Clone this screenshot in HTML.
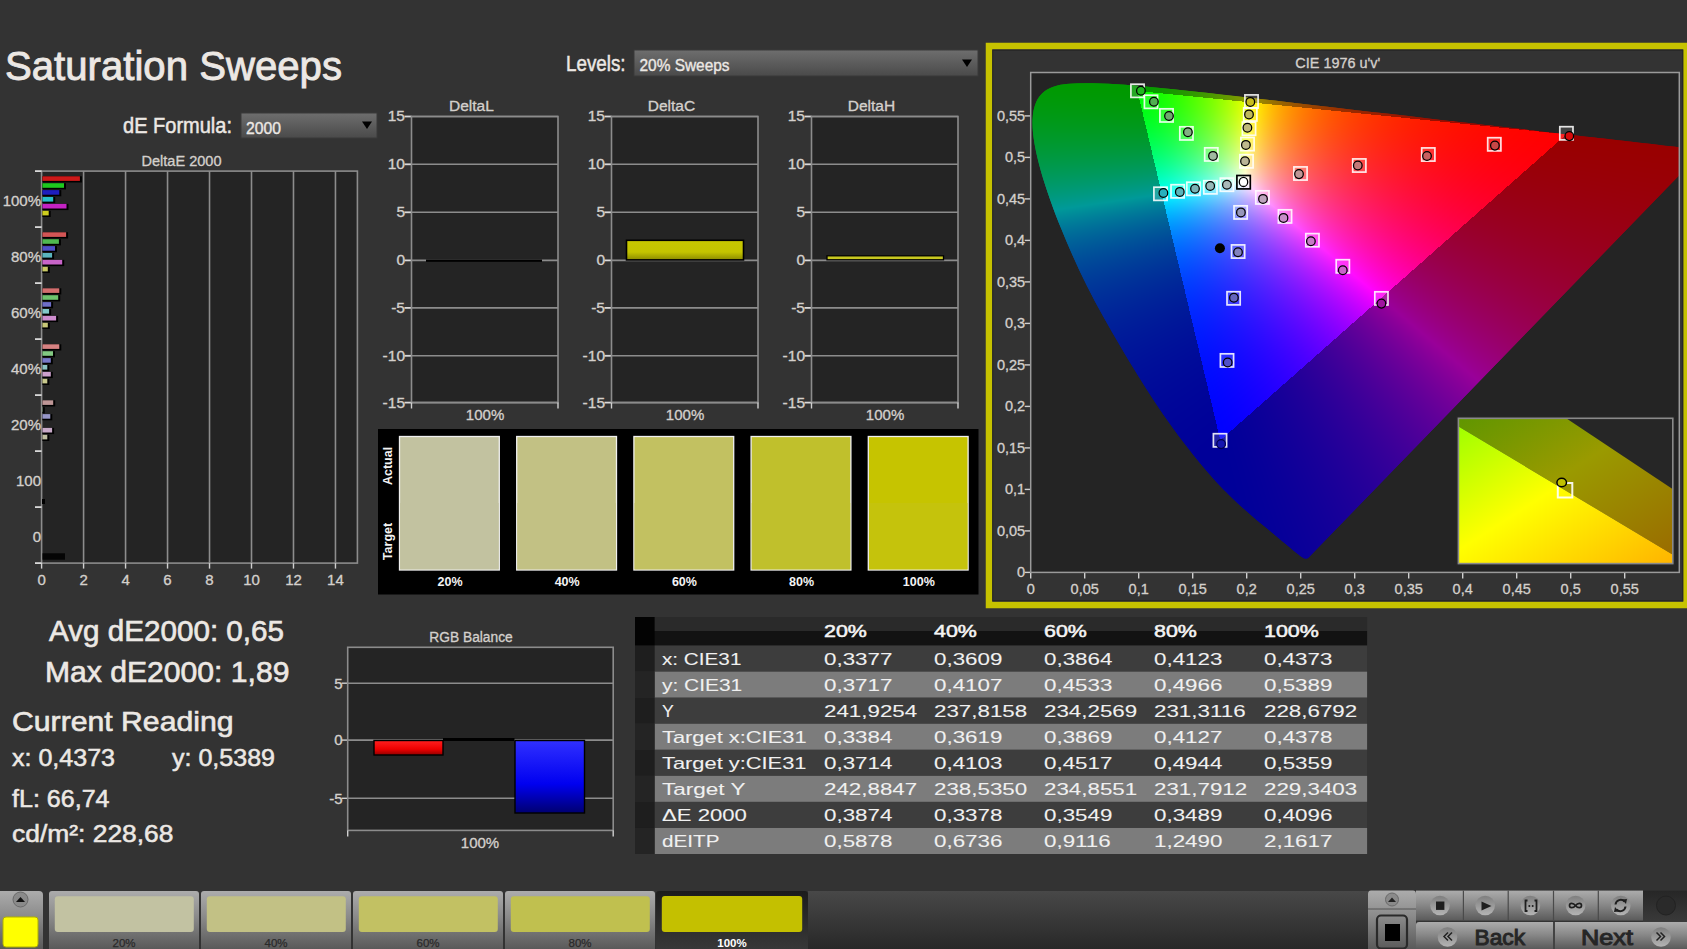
<!DOCTYPE html>
<html><head><meta charset="utf-8"><style>
html,body{margin:0;padding:0;background:#333333;width:1687px;height:949px;overflow:hidden}
svg{position:absolute;left:0;top:0}
text{font-family:"Liberation Sans", sans-serif}
#cv{position:absolute;left:0;top:0}
</style></head><body>
<svg width="1687" height="949" viewBox="0 0 1687 949">
<text x="5" y="79.5" font-size="41" fill="#ece8e4" stroke="#ece8e4" stroke-width="0.90" textLength="337" lengthAdjust="spacingAndGlyphs">Saturation Sweeps</text><text x="123" y="133" font-size="21.5" fill="#ece8e4" stroke="#ece8e4" stroke-width="0.47" textLength="109" lengthAdjust="spacingAndGlyphs">dE Formula:</text><text x="566" y="71" font-size="21.5" fill="#ece8e4" stroke="#ece8e4" stroke-width="0.47" textLength="59.5" lengthAdjust="spacingAndGlyphs">Levels:</text><defs><linearGradient id="dd" x1="0" y1="0" x2="0" y2="1"><stop offset="0" stop-color="#6e6e6e"/><stop offset="1" stop-color="#4a4a4a"/></linearGradient><linearGradient id="btn" x1="0" y1="0" x2="0" y2="1"><stop offset="0" stop-color="#acacac"/><stop offset="0.45" stop-color="#8a8a8a"/><stop offset="1" stop-color="#5a5a5a"/></linearGradient><linearGradient id="btnsel" x1="0" y1="0" x2="0" y2="1"><stop offset="0" stop-color="#1c1c1c"/><stop offset="1" stop-color="#383838"/></linearGradient><linearGradient id="barY" x1="0" y1="0" x2="0" y2="1"><stop offset="0" stop-color="#c8c800"/><stop offset="0.6" stop-color="#c4c400"/><stop offset="1" stop-color="#8a8a00"/></linearGradient><linearGradient id="barR" x1="0" y1="0" x2="0" y2="1"><stop offset="0" stop-color="#ff2020"/><stop offset="0.6" stop-color="#ee0000"/><stop offset="1" stop-color="#900000"/></linearGradient><linearGradient id="barB" x1="0" y1="0" x2="0" y2="1"><stop offset="0" stop-color="#3030ff"/><stop offset="0.6" stop-color="#0000f0"/><stop offset="1" stop-color="#000070"/></linearGradient></defs><rect x="241" y="113" width="136" height="25" fill="url(#dd)" stroke="#3a3a3a" stroke-width="1"/><text x="246" y="133.5" font-size="17" fill="#ece8e4" stroke="#ece8e4" stroke-width="0.37" textLength="35" lengthAdjust="spacingAndGlyphs">2000</text><path d="M362 121.5 L372 121.5 L367 129 Z" fill="#000"/><rect x="634" y="50" width="344" height="26" fill="url(#dd)" stroke="#3a3a3a" stroke-width="1"/><text x="639.5" y="70.7" font-size="17" fill="#ece8e4" stroke="#ece8e4" stroke-width="0.37" textLength="90" lengthAdjust="spacingAndGlyphs">20% Sweeps</text><path d="M962 59.5 L972 59.5 L967 67 Z" fill="#000"/><text x="181.5" y="165.6" font-size="15.5" fill="#d4d0cc" stroke="#d4d0cc" stroke-width="0.34" text-anchor="middle" textLength="80" lengthAdjust="spacingAndGlyphs">DeltaE 2000</text><rect x="41.6" y="171.1" width="315.79999999999995" height="392.0" fill="#242424"/><line x1="83.58" y1="171.1" x2="83.58" y2="563.1" stroke="#8c8c8c" stroke-width="1.6"/><line x1="125.56" y1="171.1" x2="125.56" y2="563.1" stroke="#8c8c8c" stroke-width="1.6"/><line x1="167.54" y1="171.1" x2="167.54" y2="563.1" stroke="#8c8c8c" stroke-width="1.6"/><line x1="209.51999999999998" y1="171.1" x2="209.51999999999998" y2="563.1" stroke="#8c8c8c" stroke-width="1.6"/><line x1="251.49999999999997" y1="171.1" x2="251.49999999999997" y2="563.1" stroke="#8c8c8c" stroke-width="1.6"/><line x1="293.48" y1="171.1" x2="293.48" y2="563.1" stroke="#8c8c8c" stroke-width="1.6"/><line x1="335.46" y1="171.1" x2="335.46" y2="563.1" stroke="#8c8c8c" stroke-width="1.6"/><rect x="41.6" y="171.1" width="315.79999999999995" height="392.0" fill="none" stroke="#8c8c8c" stroke-width="1.6"/><line x1="41.6" y1="563.1" x2="41.6" y2="568.6" stroke="#d0d0d0" stroke-width="1.4"/><text x="41.6" y="584.8" font-size="15" fill="#d4d0cc" stroke="#d4d0cc" stroke-width="0.33" text-anchor="middle">0</text><line x1="83.58" y1="563.1" x2="83.58" y2="568.6" stroke="#d0d0d0" stroke-width="1.4"/><text x="83.58" y="584.8" font-size="15" fill="#d4d0cc" stroke="#d4d0cc" stroke-width="0.33" text-anchor="middle">2</text><line x1="125.56" y1="563.1" x2="125.56" y2="568.6" stroke="#d0d0d0" stroke-width="1.4"/><text x="125.56" y="584.8" font-size="15" fill="#d4d0cc" stroke="#d4d0cc" stroke-width="0.33" text-anchor="middle">4</text><line x1="167.54" y1="563.1" x2="167.54" y2="568.6" stroke="#d0d0d0" stroke-width="1.4"/><text x="167.54" y="584.8" font-size="15" fill="#d4d0cc" stroke="#d4d0cc" stroke-width="0.33" text-anchor="middle">6</text><line x1="209.51999999999998" y1="563.1" x2="209.51999999999998" y2="568.6" stroke="#d0d0d0" stroke-width="1.4"/><text x="209.51999999999998" y="584.8" font-size="15" fill="#d4d0cc" stroke="#d4d0cc" stroke-width="0.33" text-anchor="middle">8</text><line x1="251.49999999999997" y1="563.1" x2="251.49999999999997" y2="568.6" stroke="#d0d0d0" stroke-width="1.4"/><text x="251.49999999999997" y="584.8" font-size="15" fill="#d4d0cc" stroke="#d4d0cc" stroke-width="0.33" text-anchor="middle">10</text><line x1="293.48" y1="563.1" x2="293.48" y2="568.6" stroke="#d0d0d0" stroke-width="1.4"/><text x="293.48" y="584.8" font-size="15" fill="#d4d0cc" stroke="#d4d0cc" stroke-width="0.33" text-anchor="middle">12</text><line x1="335.46" y1="563.1" x2="335.46" y2="568.6" stroke="#d0d0d0" stroke-width="1.4"/><text x="335.46" y="584.8" font-size="15" fill="#d4d0cc" stroke="#d4d0cc" stroke-width="0.33" text-anchor="middle">14</text><line x1="35" y1="171.1" x2="41.6" y2="171.1" stroke="#d8d8d8" stroke-width="1.8"/><line x1="35" y1="227.1" x2="41.6" y2="227.1" stroke="#d8d8d8" stroke-width="1.8"/><line x1="35" y1="283.1" x2="41.6" y2="283.1" stroke="#d8d8d8" stroke-width="1.8"/><line x1="35" y1="339.1" x2="41.6" y2="339.1" stroke="#d8d8d8" stroke-width="1.8"/><line x1="35" y1="395.1" x2="41.6" y2="395.1" stroke="#d8d8d8" stroke-width="1.8"/><line x1="35" y1="451.1" x2="41.6" y2="451.1" stroke="#d8d8d8" stroke-width="1.8"/><line x1="35" y1="507.1" x2="41.6" y2="507.1" stroke="#d8d8d8" stroke-width="1.8"/><line x1="35" y1="563.1" x2="41.6" y2="563.1" stroke="#d8d8d8" stroke-width="1.8"/><text x="41" y="205.5" font-size="15" fill="#d4d0cc" stroke="#d4d0cc" stroke-width="0.33" text-anchor="end">100%</text><text x="41" y="261.5" font-size="15" fill="#d4d0cc" stroke="#d4d0cc" stroke-width="0.33" text-anchor="end">80%</text><text x="41" y="317.5" font-size="15" fill="#d4d0cc" stroke="#d4d0cc" stroke-width="0.33" text-anchor="end">60%</text><text x="41" y="373.5" font-size="15" fill="#d4d0cc" stroke="#d4d0cc" stroke-width="0.33" text-anchor="end">40%</text><text x="41" y="429.5" font-size="15" fill="#d4d0cc" stroke="#d4d0cc" stroke-width="0.33" text-anchor="end">20%</text><text x="41" y="485.5" font-size="15" fill="#d4d0cc" stroke="#d4d0cc" stroke-width="0.33" text-anchor="end">100</text><text x="41" y="541.5" font-size="15" fill="#d4d0cc" stroke="#d4d0cc" stroke-width="0.33" text-anchor="end">0</text><rect x="42.4" y="176.3" width="39.5" height="6.2" fill="#000"/><rect x="42.4" y="176.3" width="37.5" height="4.6" fill="rgb(205,25,25)"/><rect x="42.4" y="183.2" width="23.6" height="6.2" fill="#000"/><rect x="42.4" y="183.2" width="21.6" height="4.6" fill="rgb(30,200,30)"/><rect x="42.4" y="190.1" width="18.9" height="6.2" fill="#000"/><rect x="42.4" y="190.1" width="16.9" height="4.6" fill="rgb(30,30,190)"/><rect x="42.4" y="197.0" width="12.8" height="6.2" fill="#000"/><rect x="42.4" y="197.0" width="10.8" height="4.6" fill="rgb(40,190,200)"/><rect x="42.4" y="203.9" width="26.1" height="6.2" fill="#000"/><rect x="42.4" y="203.9" width="24.1" height="4.6" fill="rgb(195,35,195)"/><rect x="42.4" y="210.8" width="8.3" height="6.2" fill="#000"/><rect x="42.4" y="210.8" width="6.3" height="4.6" fill="rgb(205,205,30)"/><rect x="42.4" y="232.3" width="25.7" height="6.2" fill="#000"/><rect x="42.4" y="232.3" width="23.7" height="4.6" fill="rgb(210,85,85)"/><rect x="42.4" y="239.2" width="18.5" height="6.2" fill="#000"/><rect x="42.4" y="239.2" width="16.5" height="4.6" fill="rgb(80,185,80)"/><rect x="42.4" y="246.1" width="14.6" height="6.2" fill="#000"/><rect x="42.4" y="246.1" width="12.6" height="4.6" fill="rgb(80,80,200)"/><rect x="42.4" y="253.0" width="11.7" height="6.2" fill="#000"/><rect x="42.4" y="253.0" width="9.7" height="4.6" fill="rgb(90,180,190)"/><rect x="42.4" y="259.9" width="21.8" height="6.2" fill="#000"/><rect x="42.4" y="259.9" width="19.8" height="4.6" fill="rgb(200,100,200)"/><rect x="42.4" y="266.8" width="7.4" height="6.2" fill="#000"/><rect x="42.4" y="266.8" width="5.4" height="4.6" fill="rgb(200,200,100)"/><rect x="42.4" y="288.3" width="18.9" height="6.2" fill="#000"/><rect x="42.4" y="288.3" width="16.9" height="4.6" fill="rgb(210,110,110)"/><rect x="42.4" y="295.2" width="17.8" height="6.2" fill="#000"/><rect x="42.4" y="295.2" width="15.8" height="4.6" fill="rgb(110,195,110)"/><rect x="42.4" y="302.1" width="10.7" height="6.2" fill="#000"/><rect x="42.4" y="302.1" width="8.7" height="4.6" fill="rgb(110,110,200)"/><rect x="42.4" y="309.0" width="8.7" height="6.2" fill="#000"/><rect x="42.4" y="309.0" width="6.7" height="4.6" fill="rgb(130,200,200)"/><rect x="42.4" y="315.9" width="15.7" height="6.2" fill="#000"/><rect x="42.4" y="315.9" width="13.7" height="4.6" fill="rgb(205,140,205)"/><rect x="42.4" y="322.8" width="7.4" height="6.2" fill="#000"/><rect x="42.4" y="322.8" width="5.4" height="4.6" fill="rgb(200,200,120)"/><rect x="42.4" y="344.3" width="18.9" height="6.2" fill="#000"/><rect x="42.4" y="344.3" width="16.9" height="4.6" fill="rgb(215,130,130)"/><rect x="42.4" y="351.2" width="12.6" height="6.2" fill="#000"/><rect x="42.4" y="351.2" width="10.6" height="4.6" fill="rgb(130,200,130)"/><rect x="42.4" y="358.1" width="10.4" height="6.2" fill="#000"/><rect x="42.4" y="358.1" width="8.4" height="4.6" fill="rgb(120,120,200)"/><rect x="42.4" y="365.0" width="6.9" height="6.2" fill="#000"/><rect x="42.4" y="365.0" width="4.9" height="4.6" fill="rgb(140,195,195)"/><rect x="42.4" y="371.9" width="10.4" height="6.2" fill="#000"/><rect x="42.4" y="371.9" width="8.4" height="4.6" fill="rgb(205,160,205)"/><rect x="42.4" y="378.8" width="6.9" height="6.2" fill="#000"/><rect x="42.4" y="378.8" width="4.9" height="4.6" fill="rgb(200,200,140)"/><rect x="42.4" y="400.3" width="12.8" height="6.2" fill="#000"/><rect x="42.4" y="400.3" width="10.8" height="4.6" fill="rgb(190,150,150)"/><rect x="42.4" y="407.2" width="2.4" height="6.2" fill="#000"/><rect x="42.4" y="407.2" width="0.4" height="4.6" fill="rgb(150,190,150)"/><rect x="42.4" y="414.1" width="9.9" height="6.2" fill="#000"/><rect x="42.4" y="414.1" width="7.9" height="4.6" fill="rgb(150,150,200)"/><rect x="42.4" y="427.9" width="11.7" height="6.2" fill="#000"/><rect x="42.4" y="427.9" width="9.7" height="4.6" fill="rgb(200,170,200)"/><rect x="42.4" y="434.8" width="6.9" height="6.2" fill="#000"/><rect x="42.4" y="434.8" width="4.9" height="4.6" fill="rgb(190,190,160)"/><rect x="42" y="499" width="3" height="5" fill="#000"/><rect x="42.5" y="553.3" width="22.5" height="6.4" fill="#050505"/><text x="471.45" y="111" font-size="15.5" fill="#d4d0cc" stroke="#d4d0cc" stroke-width="0.34" text-anchor="middle">DeltaL</text><rect x="411.5" y="116.5" width="146.5" height="286.0" fill="#242424"/><line x1="411.5" y1="116.5" x2="558.0" y2="116.5" stroke="#8c8c8c" stroke-width="1.6"/><line x1="404.5" y1="116.5" x2="411.5" y2="116.5" stroke="#d8d8d8" stroke-width="1.8"/><text x="405.0" y="121.4" font-size="15.5" fill="#d4d0cc" stroke="#d4d0cc" stroke-width="0.34" text-anchor="end">15</text><line x1="411.5" y1="164.3" x2="558.0" y2="164.3" stroke="#8c8c8c" stroke-width="1.6"/><line x1="404.5" y1="164.3" x2="411.5" y2="164.3" stroke="#d8d8d8" stroke-width="1.8"/><text x="405.0" y="169.20000000000002" font-size="15.5" fill="#d4d0cc" stroke="#d4d0cc" stroke-width="0.34" text-anchor="end">10</text><line x1="411.5" y1="212.3" x2="558.0" y2="212.3" stroke="#8c8c8c" stroke-width="1.6"/><line x1="404.5" y1="212.3" x2="411.5" y2="212.3" stroke="#d8d8d8" stroke-width="1.8"/><text x="405.0" y="217.20000000000002" font-size="15.5" fill="#d4d0cc" stroke="#d4d0cc" stroke-width="0.34" text-anchor="end">5</text><line x1="411.5" y1="260.4" x2="558.0" y2="260.4" stroke="#8c8c8c" stroke-width="1.6"/><line x1="404.5" y1="260.4" x2="411.5" y2="260.4" stroke="#d8d8d8" stroke-width="1.8"/><text x="405.0" y="265.29999999999995" font-size="15.5" fill="#d4d0cc" stroke="#d4d0cc" stroke-width="0.34" text-anchor="end">0</text><line x1="411.5" y1="307.9" x2="558.0" y2="307.9" stroke="#8c8c8c" stroke-width="1.6"/><line x1="404.5" y1="307.9" x2="411.5" y2="307.9" stroke="#d8d8d8" stroke-width="1.8"/><text x="405.0" y="312.79999999999995" font-size="15.5" fill="#d4d0cc" stroke="#d4d0cc" stroke-width="0.34" text-anchor="end">-5</text><line x1="411.5" y1="355.8" x2="558.0" y2="355.8" stroke="#8c8c8c" stroke-width="1.6"/><line x1="404.5" y1="355.8" x2="411.5" y2="355.8" stroke="#d8d8d8" stroke-width="1.8"/><text x="405.0" y="360.7" font-size="15.5" fill="#d4d0cc" stroke="#d4d0cc" stroke-width="0.34" text-anchor="end">-10</text><line x1="411.5" y1="402.6" x2="558.0" y2="402.6" stroke="#8c8c8c" stroke-width="1.6"/><line x1="404.5" y1="402.6" x2="411.5" y2="402.6" stroke="#d8d8d8" stroke-width="1.8"/><text x="405.0" y="407.5" font-size="15.5" fill="#d4d0cc" stroke="#d4d0cc" stroke-width="0.34" text-anchor="end">-15</text><rect x="411.5" y="116.5" width="146.5" height="286.0" fill="none" stroke="#8c8c8c" stroke-width="1.6"/><line x1="411.5" y1="402.5" x2="411.5" y2="408.5" stroke="#d0d0d0" stroke-width="1.4"/><line x1="558.0" y1="402.5" x2="558.0" y2="408.5" stroke="#d0d0d0" stroke-width="1.4"/><text x="485.05" y="419.6" font-size="15" fill="#d4d0cc" stroke="#d4d0cc" stroke-width="0.33" text-anchor="middle">100%</text><text x="671.45" y="111" font-size="15.5" fill="#d4d0cc" stroke="#d4d0cc" stroke-width="0.34" text-anchor="middle">DeltaC</text><rect x="611.5" y="116.5" width="146.5" height="286.0" fill="#242424"/><line x1="611.5" y1="116.5" x2="758.0" y2="116.5" stroke="#8c8c8c" stroke-width="1.6"/><line x1="604.5" y1="116.5" x2="611.5" y2="116.5" stroke="#d8d8d8" stroke-width="1.8"/><text x="605.0" y="121.4" font-size="15.5" fill="#d4d0cc" stroke="#d4d0cc" stroke-width="0.34" text-anchor="end">15</text><line x1="611.5" y1="164.3" x2="758.0" y2="164.3" stroke="#8c8c8c" stroke-width="1.6"/><line x1="604.5" y1="164.3" x2="611.5" y2="164.3" stroke="#d8d8d8" stroke-width="1.8"/><text x="605.0" y="169.20000000000002" font-size="15.5" fill="#d4d0cc" stroke="#d4d0cc" stroke-width="0.34" text-anchor="end">10</text><line x1="611.5" y1="212.3" x2="758.0" y2="212.3" stroke="#8c8c8c" stroke-width="1.6"/><line x1="604.5" y1="212.3" x2="611.5" y2="212.3" stroke="#d8d8d8" stroke-width="1.8"/><text x="605.0" y="217.20000000000002" font-size="15.5" fill="#d4d0cc" stroke="#d4d0cc" stroke-width="0.34" text-anchor="end">5</text><line x1="611.5" y1="260.4" x2="758.0" y2="260.4" stroke="#8c8c8c" stroke-width="1.6"/><line x1="604.5" y1="260.4" x2="611.5" y2="260.4" stroke="#d8d8d8" stroke-width="1.8"/><text x="605.0" y="265.29999999999995" font-size="15.5" fill="#d4d0cc" stroke="#d4d0cc" stroke-width="0.34" text-anchor="end">0</text><line x1="611.5" y1="307.9" x2="758.0" y2="307.9" stroke="#8c8c8c" stroke-width="1.6"/><line x1="604.5" y1="307.9" x2="611.5" y2="307.9" stroke="#d8d8d8" stroke-width="1.8"/><text x="605.0" y="312.79999999999995" font-size="15.5" fill="#d4d0cc" stroke="#d4d0cc" stroke-width="0.34" text-anchor="end">-5</text><line x1="611.5" y1="355.8" x2="758.0" y2="355.8" stroke="#8c8c8c" stroke-width="1.6"/><line x1="604.5" y1="355.8" x2="611.5" y2="355.8" stroke="#d8d8d8" stroke-width="1.8"/><text x="605.0" y="360.7" font-size="15.5" fill="#d4d0cc" stroke="#d4d0cc" stroke-width="0.34" text-anchor="end">-10</text><line x1="611.5" y1="402.6" x2="758.0" y2="402.6" stroke="#8c8c8c" stroke-width="1.6"/><line x1="604.5" y1="402.6" x2="611.5" y2="402.6" stroke="#d8d8d8" stroke-width="1.8"/><text x="605.0" y="407.5" font-size="15.5" fill="#d4d0cc" stroke="#d4d0cc" stroke-width="0.34" text-anchor="end">-15</text><rect x="611.5" y="116.5" width="146.5" height="286.0" fill="none" stroke="#8c8c8c" stroke-width="1.6"/><line x1="611.5" y1="402.5" x2="611.5" y2="408.5" stroke="#d0d0d0" stroke-width="1.4"/><line x1="758.0" y1="402.5" x2="758.0" y2="408.5" stroke="#d0d0d0" stroke-width="1.4"/><text x="685.05" y="419.6" font-size="15" fill="#d4d0cc" stroke="#d4d0cc" stroke-width="0.33" text-anchor="middle">100%</text><text x="871.45" y="111" font-size="15.5" fill="#d4d0cc" stroke="#d4d0cc" stroke-width="0.34" text-anchor="middle">DeltaH</text><rect x="811.5" y="116.5" width="146.5" height="286.0" fill="#242424"/><line x1="811.5" y1="116.5" x2="958.0" y2="116.5" stroke="#8c8c8c" stroke-width="1.6"/><line x1="804.5" y1="116.5" x2="811.5" y2="116.5" stroke="#d8d8d8" stroke-width="1.8"/><text x="805.0" y="121.4" font-size="15.5" fill="#d4d0cc" stroke="#d4d0cc" stroke-width="0.34" text-anchor="end">15</text><line x1="811.5" y1="164.3" x2="958.0" y2="164.3" stroke="#8c8c8c" stroke-width="1.6"/><line x1="804.5" y1="164.3" x2="811.5" y2="164.3" stroke="#d8d8d8" stroke-width="1.8"/><text x="805.0" y="169.20000000000002" font-size="15.5" fill="#d4d0cc" stroke="#d4d0cc" stroke-width="0.34" text-anchor="end">10</text><line x1="811.5" y1="212.3" x2="958.0" y2="212.3" stroke="#8c8c8c" stroke-width="1.6"/><line x1="804.5" y1="212.3" x2="811.5" y2="212.3" stroke="#d8d8d8" stroke-width="1.8"/><text x="805.0" y="217.20000000000002" font-size="15.5" fill="#d4d0cc" stroke="#d4d0cc" stroke-width="0.34" text-anchor="end">5</text><line x1="811.5" y1="260.4" x2="958.0" y2="260.4" stroke="#8c8c8c" stroke-width="1.6"/><line x1="804.5" y1="260.4" x2="811.5" y2="260.4" stroke="#d8d8d8" stroke-width="1.8"/><text x="805.0" y="265.29999999999995" font-size="15.5" fill="#d4d0cc" stroke="#d4d0cc" stroke-width="0.34" text-anchor="end">0</text><line x1="811.5" y1="307.9" x2="958.0" y2="307.9" stroke="#8c8c8c" stroke-width="1.6"/><line x1="804.5" y1="307.9" x2="811.5" y2="307.9" stroke="#d8d8d8" stroke-width="1.8"/><text x="805.0" y="312.79999999999995" font-size="15.5" fill="#d4d0cc" stroke="#d4d0cc" stroke-width="0.34" text-anchor="end">-5</text><line x1="811.5" y1="355.8" x2="958.0" y2="355.8" stroke="#8c8c8c" stroke-width="1.6"/><line x1="804.5" y1="355.8" x2="811.5" y2="355.8" stroke="#d8d8d8" stroke-width="1.8"/><text x="805.0" y="360.7" font-size="15.5" fill="#d4d0cc" stroke="#d4d0cc" stroke-width="0.34" text-anchor="end">-10</text><line x1="811.5" y1="402.6" x2="958.0" y2="402.6" stroke="#8c8c8c" stroke-width="1.6"/><line x1="804.5" y1="402.6" x2="811.5" y2="402.6" stroke="#d8d8d8" stroke-width="1.8"/><text x="805.0" y="407.5" font-size="15.5" fill="#d4d0cc" stroke="#d4d0cc" stroke-width="0.34" text-anchor="end">-15</text><rect x="811.5" y="116.5" width="146.5" height="286.0" fill="none" stroke="#8c8c8c" stroke-width="1.6"/><line x1="811.5" y1="402.5" x2="811.5" y2="408.5" stroke="#d0d0d0" stroke-width="1.4"/><line x1="958.0" y1="402.5" x2="958.0" y2="408.5" stroke="#d0d0d0" stroke-width="1.4"/><text x="885.05" y="419.6" font-size="15" fill="#d4d0cc" stroke="#d4d0cc" stroke-width="0.33" text-anchor="middle">100%</text><rect x="426" y="259.5" width="116" height="2.4" fill="#000"/><rect x="626.5" y="240.3" width="117" height="19.6" fill="url(#barY)" stroke="#000" stroke-width="1.6"/><rect x="827" y="255.8" width="116.5" height="4.0" fill="#c8c820" stroke="#000" stroke-width="1.3"/><rect x="378" y="429" width="600.5" height="165.5" fill="#000"/><rect x="399.5" y="436.5" width="99.8" height="133.5" fill="#c2c2a0" stroke="#f0f0f0" stroke-width="1.3"/><rect x="400.2" y="503" width="98.4" height="66.3" fill="#c2c2a0"/><text x="450.0" y="586" font-size="12.5" fill="#f4f4f4" text-anchor="middle" font-weight="bold">20%</text><rect x="516.7" y="436.5" width="99.8" height="133.5" fill="#c2c184" stroke="#f0f0f0" stroke-width="1.3"/><rect x="517.4000000000001" y="503" width="98.4" height="66.3" fill="#c2c184"/><text x="567.2" y="586" font-size="12.5" fill="#f4f4f4" text-anchor="middle" font-weight="bold">40%</text><rect x="633.9" y="436.5" width="99.8" height="133.5" fill="#c2c161" stroke="#f0f0f0" stroke-width="1.3"/><rect x="634.6" y="503" width="98.4" height="66.3" fill="#c2c161"/><text x="684.4" y="586" font-size="12.5" fill="#f4f4f4" text-anchor="middle" font-weight="bold">60%</text><rect x="751.1" y="436.5" width="99.8" height="133.5" fill="#c0c02c" stroke="#f0f0f0" stroke-width="1.3"/><rect x="751.8000000000001" y="503" width="98.4" height="66.3" fill="#c0c02c"/><text x="801.6" y="586" font-size="12.5" fill="#f4f4f4" text-anchor="middle" font-weight="bold">80%</text><rect x="868.3" y="436.5" width="99.8" height="133.5" fill="#c6c400" stroke="#f0f0f0" stroke-width="1.3"/><rect x="869.0" y="503" width="98.4" height="66.3" fill="#c5c30c"/><text x="918.8" y="586" font-size="12.5" fill="#f4f4f4" text-anchor="middle" font-weight="bold">100%</text><text x="0" y="0" font-size="12.5" fill="#f4f4f4" text-anchor="middle" font-weight="bold" transform="translate(391.5,466) rotate(-90)">Actual</text><text x="0" y="0" font-size="12.5" fill="#f4f4f4" text-anchor="middle" font-weight="bold" transform="translate(391.5,541.5) rotate(-90)">Target</text><text x="49" y="640.8" font-size="30" fill="#ece8e4" stroke="#ece8e4" stroke-width="0.66" textLength="235" lengthAdjust="spacingAndGlyphs">Avg dE2000: 0,65</text><text x="45" y="682.4" font-size="30" fill="#ece8e4" stroke="#ece8e4" stroke-width="0.66" textLength="244.5" lengthAdjust="spacingAndGlyphs">Max dE2000: 1,89</text><text x="12" y="731" font-size="28.5" fill="#ece8e4" stroke="#ece8e4" stroke-width="0.63" textLength="221.5" lengthAdjust="spacingAndGlyphs">Current Reading</text><text x="12" y="766.2" font-size="23.5" fill="#ece8e4" stroke="#ece8e4" stroke-width="0.52" textLength="103" lengthAdjust="spacingAndGlyphs">x: 0,4373</text><text x="172" y="766.2" font-size="23.5" fill="#ece8e4" stroke="#ece8e4" stroke-width="0.52" textLength="103" lengthAdjust="spacingAndGlyphs">y: 0,5389</text><text x="12" y="807.4" font-size="23.5" fill="#ece8e4" stroke="#ece8e4" stroke-width="0.52" textLength="97.5" lengthAdjust="spacingAndGlyphs">fL: 66,74</text><text x="12" y="842.3" font-size="23.5" fill="#ece8e4" stroke="#ece8e4" stroke-width="0.52" textLength="161.5" lengthAdjust="spacingAndGlyphs">cd/m²: 228,68</text><text x="471" y="642" font-size="15.5" fill="#d4d0cc" stroke="#d4d0cc" stroke-width="0.34" text-anchor="middle" textLength="83.5" lengthAdjust="spacingAndGlyphs">RGB Balance</text><rect x="347.7" y="647.3" width="265.50000000000006" height="183.10000000000002" fill="#242424"/><line x1="347.7" y1="683.2" x2="613.2" y2="683.2" stroke="#8c8c8c" stroke-width="1.6"/><line x1="341.7" y1="683.2" x2="347.7" y2="683.2" stroke="#d0d0d0" stroke-width="1.4"/><text x="342.7" y="688.5" font-size="15" fill="#d4d0cc" stroke="#d4d0cc" stroke-width="0.33" text-anchor="end">5</text><line x1="347.7" y1="740.1" x2="613.2" y2="740.1" stroke="#8c8c8c" stroke-width="1.6"/><line x1="341.7" y1="740.1" x2="347.7" y2="740.1" stroke="#d0d0d0" stroke-width="1.4"/><text x="342.7" y="745.4" font-size="15" fill="#d4d0cc" stroke="#d4d0cc" stroke-width="0.33" text-anchor="end">0</text><line x1="347.7" y1="798.3" x2="613.2" y2="798.3" stroke="#8c8c8c" stroke-width="1.6"/><line x1="341.7" y1="798.3" x2="347.7" y2="798.3" stroke="#d0d0d0" stroke-width="1.4"/><text x="342.7" y="803.5999999999999" font-size="15" fill="#d4d0cc" stroke="#d4d0cc" stroke-width="0.33" text-anchor="end">-5</text><rect x="347.7" y="647.3" width="265.50000000000006" height="183.10000000000002" fill="none" stroke="#8c8c8c" stroke-width="1.6"/><line x1="347.7" y1="830.4" x2="347.7" y2="836.4" stroke="#d0d0d0" stroke-width="1.4"/><line x1="613.2" y1="830.4" x2="613.2" y2="836.4" stroke="#d0d0d0" stroke-width="1.4"/><text x="480" y="847.5" font-size="15" fill="#d4d0cc" stroke="#d4d0cc" stroke-width="0.33" text-anchor="middle">100%</text><rect x="374" y="740.5" width="69" height="14.5" fill="url(#barR)" stroke="#000" stroke-width="1.4"/><rect x="443" y="738" width="71.5" height="3" fill="#000"/><rect x="515" y="740.5" width="69.5" height="72.5" fill="url(#barB)" stroke="#000" stroke-width="1.4"/><rect x="635" y="617" width="732.0999999999999" height="14" fill="#2a2a2a"/><rect x="635" y="631" width="732.0999999999999" height="14.6" fill="#121212"/><rect x="635" y="617" width="19.6" height="28.6" fill="#030303"/><text x="824" y="636.8" font-size="16.5" fill="#f4f4f4" stroke="#f4f4f4" stroke-width="0.49" textLength="42.9" lengthAdjust="spacingAndGlyphs">20%</text><text x="934" y="636.8" font-size="16.5" fill="#f4f4f4" stroke="#f4f4f4" stroke-width="0.49" textLength="42.9" lengthAdjust="spacingAndGlyphs">40%</text><text x="1044" y="636.8" font-size="16.5" fill="#f4f4f4" stroke="#f4f4f4" stroke-width="0.49" textLength="42.9" lengthAdjust="spacingAndGlyphs">60%</text><text x="1154" y="636.8" font-size="16.5" fill="#f4f4f4" stroke="#f4f4f4" stroke-width="0.49" textLength="42.9" lengthAdjust="spacingAndGlyphs">80%</text><text x="1264" y="636.8" font-size="16.5" fill="#f4f4f4" stroke="#f4f4f4" stroke-width="0.49" textLength="54.9" lengthAdjust="spacingAndGlyphs">100%</text><rect x="654.6" y="645.6" width="712.4999999999999" height="26.05" fill="#3d3d3d"/><rect x="635" y="645.6" width="19.6" height="26.05" fill="#1e1e1e"/><text x="662" y="664.8000000000001" font-size="16.5" fill="#f0f0f0" stroke="#f0f0f0" stroke-width="0.08" textLength="79.4" lengthAdjust="spacingAndGlyphs">x: CIE31</text><text x="824" y="664.8000000000001" font-size="16.5" fill="#f0f0f0" stroke="#f0f0f0" stroke-width="0.08" textLength="68.4" lengthAdjust="spacingAndGlyphs">0,3377</text><text x="934" y="664.8000000000001" font-size="16.5" fill="#f0f0f0" stroke="#f0f0f0" stroke-width="0.08" textLength="68.4" lengthAdjust="spacingAndGlyphs">0,3609</text><text x="1044" y="664.8000000000001" font-size="16.5" fill="#f0f0f0" stroke="#f0f0f0" stroke-width="0.08" textLength="68.4" lengthAdjust="spacingAndGlyphs">0,3864</text><text x="1154" y="664.8000000000001" font-size="16.5" fill="#f0f0f0" stroke="#f0f0f0" stroke-width="0.08" textLength="68.4" lengthAdjust="spacingAndGlyphs">0,4123</text><text x="1264" y="664.8000000000001" font-size="16.5" fill="#f0f0f0" stroke="#f0f0f0" stroke-width="0.08" textLength="68.4" lengthAdjust="spacingAndGlyphs">0,4373</text><rect x="654.6" y="671.65" width="712.4999999999999" height="26.05" fill="#7c7c7c"/><rect x="635" y="671.65" width="19.6" height="26.05" fill="#242424"/><text x="662" y="690.85" font-size="16.5" fill="#f0f0f0" stroke="#f0f0f0" stroke-width="0.08" textLength="80.2" lengthAdjust="spacingAndGlyphs">y: CIE31</text><text x="824" y="690.85" font-size="16.5" fill="#f0f0f0" stroke="#f0f0f0" stroke-width="0.08" textLength="68.4" lengthAdjust="spacingAndGlyphs">0,3717</text><text x="934" y="690.85" font-size="16.5" fill="#f0f0f0" stroke="#f0f0f0" stroke-width="0.08" textLength="68.4" lengthAdjust="spacingAndGlyphs">0,4107</text><text x="1044" y="690.85" font-size="16.5" fill="#f0f0f0" stroke="#f0f0f0" stroke-width="0.08" textLength="68.4" lengthAdjust="spacingAndGlyphs">0,4533</text><text x="1154" y="690.85" font-size="16.5" fill="#f0f0f0" stroke="#f0f0f0" stroke-width="0.08" textLength="68.4" lengthAdjust="spacingAndGlyphs">0,4966</text><text x="1264" y="690.85" font-size="16.5" fill="#f0f0f0" stroke="#f0f0f0" stroke-width="0.08" textLength="68.4" lengthAdjust="spacingAndGlyphs">0,5389</text><rect x="654.6" y="697.7" width="712.4999999999999" height="26.05" fill="#3d3d3d"/><rect x="635" y="697.7" width="19.6" height="26.05" fill="#1e1e1e"/><text x="662" y="716.9000000000001" font-size="16.5" fill="#f0f0f0" stroke="#f0f0f0" stroke-width="0.08" textLength="11.8" lengthAdjust="spacingAndGlyphs">Y</text><text x="824" y="716.9000000000001" font-size="16.5" fill="#f0f0f0" stroke="#f0f0f0" stroke-width="0.08" textLength="93.2" lengthAdjust="spacingAndGlyphs">241,9254</text><text x="934" y="716.9000000000001" font-size="16.5" fill="#f0f0f0" stroke="#f0f0f0" stroke-width="0.08" textLength="93.2" lengthAdjust="spacingAndGlyphs">237,8158</text><text x="1044" y="716.9000000000001" font-size="16.5" fill="#f0f0f0" stroke="#f0f0f0" stroke-width="0.08" textLength="93.2" lengthAdjust="spacingAndGlyphs">234,2569</text><text x="1154" y="716.9000000000001" font-size="16.5" fill="#f0f0f0" stroke="#f0f0f0" stroke-width="0.08" textLength="91.6" lengthAdjust="spacingAndGlyphs">231,3116</text><text x="1264" y="716.9000000000001" font-size="16.5" fill="#f0f0f0" stroke="#f0f0f0" stroke-width="0.08" textLength="93.2" lengthAdjust="spacingAndGlyphs">228,6792</text><rect x="654.6" y="723.75" width="712.4999999999999" height="26.05" fill="#7c7c7c"/><rect x="635" y="723.75" width="19.6" height="26.05" fill="#242424"/><text x="662" y="742.95" font-size="16.5" fill="#f0f0f0" stroke="#f0f0f0" stroke-width="0.08" textLength="144.6" lengthAdjust="spacingAndGlyphs">Target x:CIE31</text><text x="824" y="742.95" font-size="16.5" fill="#f0f0f0" stroke="#f0f0f0" stroke-width="0.08" textLength="68.4" lengthAdjust="spacingAndGlyphs">0,3384</text><text x="934" y="742.95" font-size="16.5" fill="#f0f0f0" stroke="#f0f0f0" stroke-width="0.08" textLength="68.4" lengthAdjust="spacingAndGlyphs">0,3619</text><text x="1044" y="742.95" font-size="16.5" fill="#f0f0f0" stroke="#f0f0f0" stroke-width="0.08" textLength="68.4" lengthAdjust="spacingAndGlyphs">0,3869</text><text x="1154" y="742.95" font-size="16.5" fill="#f0f0f0" stroke="#f0f0f0" stroke-width="0.08" textLength="68.4" lengthAdjust="spacingAndGlyphs">0,4127</text><text x="1264" y="742.95" font-size="16.5" fill="#f0f0f0" stroke="#f0f0f0" stroke-width="0.08" textLength="68.4" lengthAdjust="spacingAndGlyphs">0,4378</text><rect x="654.6" y="749.8000000000001" width="712.4999999999999" height="26.05" fill="#3d3d3d"/><rect x="635" y="749.8000000000001" width="19.6" height="26.05" fill="#1e1e1e"/><text x="662" y="769.0000000000001" font-size="16.5" fill="#f0f0f0" stroke="#f0f0f0" stroke-width="0.08" textLength="144.5" lengthAdjust="spacingAndGlyphs">Target y:CIE31</text><text x="824" y="769.0000000000001" font-size="16.5" fill="#f0f0f0" stroke="#f0f0f0" stroke-width="0.08" textLength="68.4" lengthAdjust="spacingAndGlyphs">0,3714</text><text x="934" y="769.0000000000001" font-size="16.5" fill="#f0f0f0" stroke="#f0f0f0" stroke-width="0.08" textLength="68.4" lengthAdjust="spacingAndGlyphs">0,4103</text><text x="1044" y="769.0000000000001" font-size="16.5" fill="#f0f0f0" stroke="#f0f0f0" stroke-width="0.08" textLength="68.4" lengthAdjust="spacingAndGlyphs">0,4517</text><text x="1154" y="769.0000000000001" font-size="16.5" fill="#f0f0f0" stroke="#f0f0f0" stroke-width="0.08" textLength="68.4" lengthAdjust="spacingAndGlyphs">0,4944</text><text x="1264" y="769.0000000000001" font-size="16.5" fill="#f0f0f0" stroke="#f0f0f0" stroke-width="0.08" textLength="68.4" lengthAdjust="spacingAndGlyphs">0,5359</text><rect x="654.6" y="775.85" width="712.4999999999999" height="26.05" fill="#7c7c7c"/><rect x="635" y="775.85" width="19.6" height="26.05" fill="#242424"/><text x="662" y="795.0500000000001" font-size="16.5" fill="#f0f0f0" stroke="#f0f0f0" stroke-width="0.08" textLength="83.5" lengthAdjust="spacingAndGlyphs">Target Y</text><text x="824" y="795.0500000000001" font-size="16.5" fill="#f0f0f0" stroke="#f0f0f0" stroke-width="0.08" textLength="93.2" lengthAdjust="spacingAndGlyphs">242,8847</text><text x="934" y="795.0500000000001" font-size="16.5" fill="#f0f0f0" stroke="#f0f0f0" stroke-width="0.08" textLength="93.2" lengthAdjust="spacingAndGlyphs">238,5350</text><text x="1044" y="795.0500000000001" font-size="16.5" fill="#f0f0f0" stroke="#f0f0f0" stroke-width="0.08" textLength="93.2" lengthAdjust="spacingAndGlyphs">234,8551</text><text x="1154" y="795.0500000000001" font-size="16.5" fill="#f0f0f0" stroke="#f0f0f0" stroke-width="0.08" textLength="93.2" lengthAdjust="spacingAndGlyphs">231,7912</text><text x="1264" y="795.0500000000001" font-size="16.5" fill="#f0f0f0" stroke="#f0f0f0" stroke-width="0.08" textLength="93.2" lengthAdjust="spacingAndGlyphs">229,3403</text><rect x="654.6" y="801.9000000000001" width="712.4999999999999" height="26.05" fill="#3d3d3d"/><rect x="635" y="801.9000000000001" width="19.6" height="26.05" fill="#1e1e1e"/><text x="662" y="821.1000000000001" font-size="16.5" fill="#f0f0f0" stroke="#f0f0f0" stroke-width="0.08" textLength="84.9" lengthAdjust="spacingAndGlyphs">ΔE 2000</text><text x="824" y="821.1000000000001" font-size="16.5" fill="#f0f0f0" stroke="#f0f0f0" stroke-width="0.08" textLength="68.4" lengthAdjust="spacingAndGlyphs">0,3874</text><text x="934" y="821.1000000000001" font-size="16.5" fill="#f0f0f0" stroke="#f0f0f0" stroke-width="0.08" textLength="68.4" lengthAdjust="spacingAndGlyphs">0,3378</text><text x="1044" y="821.1000000000001" font-size="16.5" fill="#f0f0f0" stroke="#f0f0f0" stroke-width="0.08" textLength="68.4" lengthAdjust="spacingAndGlyphs">0,3549</text><text x="1154" y="821.1000000000001" font-size="16.5" fill="#f0f0f0" stroke="#f0f0f0" stroke-width="0.08" textLength="68.4" lengthAdjust="spacingAndGlyphs">0,3489</text><text x="1264" y="821.1000000000001" font-size="16.5" fill="#f0f0f0" stroke="#f0f0f0" stroke-width="0.08" textLength="68.4" lengthAdjust="spacingAndGlyphs">0,4096</text><rect x="654.6" y="827.95" width="712.4999999999999" height="26.05" fill="#7c7c7c"/><rect x="635" y="827.95" width="19.6" height="26.05" fill="#242424"/><text x="662" y="847.1500000000001" font-size="16.5" fill="#f0f0f0" stroke="#f0f0f0" stroke-width="0.08" textLength="57.5" lengthAdjust="spacingAndGlyphs">dEITP</text><text x="824" y="847.1500000000001" font-size="16.5" fill="#f0f0f0" stroke="#f0f0f0" stroke-width="0.08" textLength="68.4" lengthAdjust="spacingAndGlyphs">0,5878</text><text x="934" y="847.1500000000001" font-size="16.5" fill="#f0f0f0" stroke="#f0f0f0" stroke-width="0.08" textLength="68.4" lengthAdjust="spacingAndGlyphs">0,6736</text><text x="1044" y="847.1500000000001" font-size="16.5" fill="#f0f0f0" stroke="#f0f0f0" stroke-width="0.08" textLength="66.7" lengthAdjust="spacingAndGlyphs">0,9116</text><text x="1154" y="847.1500000000001" font-size="16.5" fill="#f0f0f0" stroke="#f0f0f0" stroke-width="0.08" textLength="68.4" lengthAdjust="spacingAndGlyphs">1,2490</text><text x="1264" y="847.1500000000001" font-size="16.5" fill="#f0f0f0" stroke="#f0f0f0" stroke-width="0.08" textLength="68.4" lengthAdjust="spacingAndGlyphs">2,1617</text><rect x="0" y="890" width="1687" height="59" fill="#333"/><path d="M0 891 L39 891 Q43 891 43 895 L43 949 L0 949 Z" fill="url(#btn)"/><circle cx="20.5" cy="899.5" r="7.5" fill="#8a8a8a" stroke="#6a6a6a" stroke-width="1"/><path d="M16 902 L25 902 L20.5 897 Z" fill="#111"/><rect x="3" y="917" width="35" height="30" rx="3" fill="#ffff00" stroke="#b0b000" stroke-width="1"/><path d="M49 949 L49 894 Q49 891 52 891 L196 891 Q199 891 199 894 L199 949 Z" fill="url(#btn)"/><rect x="54.8" y="896.3" width="139" height="35.6" rx="3" fill="#c2c2a2"/><text x="124" y="947" font-size="11.5" fill="#2a2a2a" stroke="#2a2a2a" stroke-width="0.25" text-anchor="middle">20%</text><path d="M201 949 L201 894 Q201 891 204 891 L348 891 Q351 891 351 894 L351 949 Z" fill="url(#btn)"/><rect x="206.8" y="896.3" width="139" height="35.6" rx="3" fill="#c2c185"/><text x="276" y="947" font-size="11.5" fill="#2a2a2a" stroke="#2a2a2a" stroke-width="0.25" text-anchor="middle">40%</text><path d="M353 949 L353 894 Q353 891 356 891 L500 891 Q503 891 503 894 L503 949 Z" fill="url(#btn)"/><rect x="358.8" y="896.3" width="139" height="35.6" rx="3" fill="#c2c163"/><text x="428" y="947" font-size="11.5" fill="#2a2a2a" stroke="#2a2a2a" stroke-width="0.25" text-anchor="middle">60%</text><path d="M505 949 L505 894 Q505 891 508 891 L652 891 Q655 891 655 894 L655 949 Z" fill="url(#btn)"/><rect x="510.8" y="896.3" width="139" height="35.6" rx="3" fill="#c0c04f"/><text x="580" y="947" font-size="11.5" fill="#2a2a2a" stroke="#2a2a2a" stroke-width="0.25" text-anchor="middle">80%</text><path d="M656 949 L656 894 Q656 891 659 891 L805 891 Q808 891 808 894 L808 949 Z" fill="url(#btnsel)"/><rect x="661.8" y="896" width="140.4" height="35.9" rx="3" fill="#c4c000"/><text x="732" y="947" font-size="11.5" fill="#ffffff" text-anchor="middle" font-weight="bold">100%</text><defs><linearGradient id="tbr" x1="0" y1="0" x2="0" y2="1"><stop offset="0" stop-color="#484848"/><stop offset="1" stop-color="#282828"/></linearGradient></defs><rect x="808" y="891" width="560" height="58" fill="url(#tbr)"/><path d="M1368 949 L1368 894 Q1368 890.6 1371 890.6 L1413 890.6 Q1416 890.6 1416 894 L1416 949 Z" fill="url(#btn)"/><line x1="1368" y1="909" x2="1416" y2="909" stroke="#555" stroke-width="1"/><circle cx="1392" cy="899.5" r="6.5" fill="#8a8a8a" stroke="#6a6a6a" stroke-width="1"/><path d="M1388 902 L1396 902 L1392 897.5 Z" fill="#222"/><rect x="1377" y="915.5" width="30" height="33" rx="4" fill="none" stroke="#2a2a2a" stroke-width="2.2"/><rect x="1385" y="924" width="15" height="17" fill="#000"/><rect x="1416" y="890.6" width="227" height="30" fill="url(#btn)"/><defs><linearGradient id="cb" x1="0" y1="0" x2="0" y2="1"><stop offset="0" stop-color="#7e7e7e"/><stop offset="1" stop-color="#b4b4b4"/></linearGradient></defs><circle cx="1440.0" cy="905.5" r="9.8" fill="url(#cb)"/><circle cx="1485.2" cy="905.5" r="9.8" fill="url(#cb)"/><circle cx="1530.4" cy="905.5" r="9.8" fill="url(#cb)"/><circle cx="1575.6" cy="905.5" r="9.8" fill="url(#cb)"/><circle cx="1620.8" cy="905.5" r="9.8" fill="url(#cb)"/><line x1="1463.4" y1="890.6" x2="1463.4" y2="920.5" stroke="#4a4a4a" stroke-width="1.2"/><line x1="1508.2" y1="890.6" x2="1508.2" y2="920.5" stroke="#4a4a4a" stroke-width="1.2"/><line x1="1553.5" y1="890.6" x2="1553.5" y2="920.5" stroke="#4a4a4a" stroke-width="1.2"/><line x1="1598.3" y1="890.6" x2="1598.3" y2="920.5" stroke="#4a4a4a" stroke-width="1.2"/><rect x="1436" y="901.5" width="8.4" height="8.4" fill="#1e1e1e"/><path d="M1481.5 901.5 L1491.5 906 L1481.5 910.6 Z" fill="#1e1e1e"/><path d="M1527.5 900.5 L1525.5 900.5 L1525.5 911 L1527.5 911 M1534.5 900.5 L1536.5 900.5 L1536.5 911 L1534.5 911" fill="none" stroke="#1e1e1e" stroke-width="1.8"/><circle cx="1529.3" cy="906" r="1" fill="#1e1e1e"/><circle cx="1532.7" cy="906" r="1" fill="#1e1e1e"/><path d="M1575.5 905.5 C1573.3 902.6 1569.5 902.6 1569.5 905.5 C1569.5 908.4 1573.3 908.4 1575.5 905.5 C1577.7 902.6 1581.5 902.6 1581.5 905.5 C1581.5 908.4 1577.7 908.4 1575.5 905.5 Z" fill="none" stroke="#1e1e1e" stroke-width="1.7"/><path d="M1615.5 904.5 A5.2 5.2 0 0 1 1624.5 901.5 M1625.5 906.5 A5.2 5.2 0 0 1 1616.5 909.5" fill="none" stroke="#1e1e1e" stroke-width="2"/><path d="M1622 899.5 L1627 899 L1626 904 Z M1619 911.5 L1614 912 L1615 907 Z" fill="#1e1e1e"/><defs><linearGradient id="tbr2" x1="0" y1="0" x2="0" y2="1"><stop offset="0" stop-color="#262626"/><stop offset="1" stop-color="#3a3a3a"/></linearGradient></defs><rect x="1643" y="890.6" width="44" height="31.4" fill="url(#tbr2)"/><circle cx="1666" cy="905.5" r="9.5" fill="#2a2a2a" stroke="#222" stroke-width="1"/><path d="M1416 949 L1416 925 Q1416 922 1419 922 L1553 922 L1553 949 Z" fill="url(#btn)"/><path d="M1555 949 L1555 922 L1687 922 L1687 949 Z" fill="url(#btn)"/><line x1="1554" y1="922" x2="1554" y2="949" stroke="#4a4a4a" stroke-width="1.5"/><circle cx="1447.5" cy="937" r="9.8" fill="url(#cb)"/><circle cx="1661" cy="937" r="9.8" fill="url(#cb)"/><path d="M1448 932.5 L1444 936.5 L1448 940.5 M1452 932.5 L1448 936.5 L1452 940.5" fill="none" stroke="#222" stroke-width="1.5"/><path d="M1656.5 932.5 L1660.5 936.5 L1656.5 940.5 M1660.5 932.5 L1664.5 936.5 L1660.5 940.5" fill="none" stroke="#222" stroke-width="1.5"/><text x="1474.5" y="945" font-size="21.5" fill="#262626" stroke="#262626" stroke-width="0.97" textLength="50.5" lengthAdjust="spacingAndGlyphs">Back</text><text x="1581" y="945" font-size="21.5" fill="#262626" stroke="#262626" stroke-width="0.97" textLength="52" lengthAdjust="spacingAndGlyphs">Next</text><rect x="989" y="46" width="697.5" height="559" fill="none" stroke="#c6c200" stroke-width="6.5"/><rect x="992.75" y="50.25" width="690" height="550.5" fill="none" stroke="#262626" stroke-width="1"/><text x="1337.8" y="67.8" font-size="15.5" fill="#d4d0cc" stroke="#d4d0cc" stroke-width="0.34" text-anchor="middle" textLength="85" lengthAdjust="spacingAndGlyphs">CIE 1976 u'v'</text><rect x="1030.7" y="72.5" width="648.5999999999999" height="499.9" fill="#242424"/><defs><clipPath id="locus"><path d="M1308.1 558.0C1308.1 558.0 1308.0 557.9 1307.9 558.0C1307.8 558.0 1307.8 558.2 1307.7 558.3C1307.6 558.3 1307.4 558.2 1307.3 558.3C1307.2 558.3 1307.1 558.5 1306.9 558.5C1306.7 558.6 1306.6 558.5 1306.4 558.5C1306.2 558.5 1305.9 558.5 1305.6 558.5C1305.4 558.5 1305.2 558.7 1304.7 558.5C1304.3 558.4 1303.9 558.2 1303.1 557.7C1302.4 557.3 1301.4 556.7 1300.3 555.9C1299.2 555.1 1298.1 554.2 1296.6 553.0C1295.0 551.7 1293.2 550.3 1291.1 548.5C1289.1 546.8 1286.8 544.8 1284.2 542.7C1281.6 540.5 1278.9 538.2 1275.5 535.4C1272.2 532.7 1268.3 529.5 1264.1 526.1C1259.9 522.6 1255.5 519.0 1250.4 514.5C1245.3 510.1 1239.7 505.3 1233.5 499.3C1227.4 493.3 1221.2 487.5 1213.3 478.6C1205.5 469.7 1196.2 458.9 1186.5 446.1C1176.7 433.3 1165.8 418.3 1154.8 401.7C1143.7 385.0 1131.6 365.5 1120.4 346.3C1109.1 327.1 1097.1 306.1 1087.3 286.5C1077.4 267.0 1068.6 246.7 1061.4 229.1C1054.1 211.4 1048.3 194.7 1043.8 180.7C1039.4 166.6 1036.6 154.8 1034.7 144.7C1032.9 134.5 1032.3 126.7 1032.6 119.6C1032.8 112.6 1034.1 107.1 1036.0 102.4C1038.0 97.7 1040.9 94.2 1044.3 91.5C1047.6 88.7 1051.7 87.2 1055.9 85.9C1060.2 84.6 1065.0 84.3 1069.9 83.8C1074.7 83.4 1079.9 83.4 1085.0 83.3C1090.1 83.3 1095.2 83.4 1100.4 83.5C1105.7 83.7 1110.9 83.9 1116.5 84.3C1122.0 84.6 1127.8 85.0 1133.8 85.5C1139.8 86.0 1146.0 86.6 1152.6 87.2C1159.2 87.9 1166.0 88.6 1173.3 89.3C1180.5 90.1 1188.2 90.9 1196.2 91.8C1204.2 92.7 1212.6 93.6 1221.5 94.6C1230.4 95.6 1239.8 96.7 1249.6 97.8C1259.4 98.9 1269.7 100.1 1280.4 101.3C1291.2 102.6 1302.4 103.9 1314.1 105.2C1325.7 106.6 1337.9 108.0 1350.3 109.4C1362.8 110.9 1375.8 112.3 1388.7 113.8C1401.7 115.3 1415.2 116.9 1428.1 118.4C1441.1 119.9 1453.8 121.4 1466.3 122.8C1478.9 124.3 1491.7 125.7 1503.5 127.1C1515.4 128.4 1526.7 129.7 1537.2 130.9C1547.8 132.2 1557.8 133.3 1567.0 134.4C1576.2 135.5 1584.6 136.4 1592.4 137.3C1600.1 138.2 1607.1 139.0 1613.6 139.8C1620.1 140.5 1625.9 141.2 1631.5 141.8C1637.0 142.5 1642.2 143.1 1647.0 143.6C1651.8 144.2 1656.1 144.7 1660.1 145.1C1664.0 145.6 1667.6 146.0 1670.7 146.3C1673.8 146.7 1676.5 147.0 1678.9 147.3C1681.4 147.6 1683.5 147.8 1685.3 148.0C1687.2 148.2 1688.4 148.4 1690.1 148.6C1691.9 148.8 1694.2 149.1 1695.8 149.2C1697.5 149.4 1698.6 149.6 1699.9 149.7C1701.2 149.9 1703.0 150.1 1703.6 150.1Z"/></clipPath><linearGradient id="f0" gradientUnits="userSpaceOnUse" x1="1031" y1="0" x2="1679" y2="0"><stop offset="0.0000" stop-color="#009900"/><stop offset="0.1590" stop-color="#009900"/><stop offset="0.1836" stop-color="#089900"/><stop offset="0.2654" stop-color="#3f9900"/><stop offset="0.3457" stop-color="#999800"/><stop offset="0.3812" stop-color="#997000"/><stop offset="0.4259" stop-color="#994f00"/><stop offset="0.5448" stop-color="#992200"/><stop offset="0.7346" stop-color="#990800"/><stop offset="1.0000" stop-color="#990000"/></linearGradient><linearGradient id="f1" gradientUnits="userSpaceOnUse" x1="1031" y1="0" x2="1679" y2="0"><stop offset="0.0000" stop-color="#009900"/><stop offset="0.1605" stop-color="#009900"/><stop offset="0.1852" stop-color="#089900"/><stop offset="0.2670" stop-color="#409900"/><stop offset="0.3441" stop-color="#999900"/><stop offset="0.3812" stop-color="#996f00"/><stop offset="0.4244" stop-color="#994f00"/><stop offset="0.5432" stop-color="#992200"/><stop offset="0.7330" stop-color="#990800"/><stop offset="1.0000" stop-color="#990000"/></linearGradient><linearGradient id="f2" gradientUnits="userSpaceOnUse" x1="1031" y1="0" x2="1679" y2="0"><stop offset="0.0000" stop-color="#009901"/><stop offset="0.1852" stop-color="#089900"/><stop offset="0.2670" stop-color="#409900"/><stop offset="0.3441" stop-color="#999800"/><stop offset="0.3796" stop-color="#996f00"/><stop offset="0.4228" stop-color="#994f00"/><stop offset="0.5417" stop-color="#992200"/><stop offset="0.7330" stop-color="#990800"/><stop offset="1.0000" stop-color="#990000"/></linearGradient><linearGradient id="f3" gradientUnits="userSpaceOnUse" x1="1031" y1="0" x2="1679" y2="0"><stop offset="0.0000" stop-color="#009902"/><stop offset="0.1852" stop-color="#079900"/><stop offset="0.2654" stop-color="#3e9900"/><stop offset="0.3441" stop-color="#999800"/><stop offset="0.3796" stop-color="#996e00"/><stop offset="0.4228" stop-color="#994e00"/><stop offset="0.5417" stop-color="#992100"/><stop offset="0.7330" stop-color="#990800"/><stop offset="1.0000" stop-color="#990000"/></linearGradient><linearGradient id="f4" gradientUnits="userSpaceOnUse" x1="1031" y1="0" x2="1679" y2="0"><stop offset="0.0000" stop-color="#009904"/><stop offset="0.1636" stop-color="#009900"/><stop offset="0.1651" stop-color="#00ff00"/><stop offset="0.1667" stop-color="#009900"/><stop offset="0.2562" stop-color="#369900"/><stop offset="0.3426" stop-color="#999900"/><stop offset="0.3781" stop-color="#996f00"/><stop offset="0.4213" stop-color="#994e00"/><stop offset="0.5401" stop-color="#992100"/><stop offset="0.7315" stop-color="#990700"/><stop offset="1.0000" stop-color="#990000"/></linearGradient><linearGradient id="f5" gradientUnits="userSpaceOnUse" x1="1031" y1="0" x2="1679" y2="0"><stop offset="0.0000" stop-color="#009906"/><stop offset="0.1651" stop-color="#009902"/><stop offset="0.1667" stop-color="#00ff02"/><stop offset="0.2269" stop-color="#32ff00"/><stop offset="0.2284" stop-color="#1f9900"/><stop offset="0.2870" stop-color="#539900"/><stop offset="0.3426" stop-color="#999800"/><stop offset="0.3781" stop-color="#996e00"/><stop offset="0.4213" stop-color="#994d00"/><stop offset="0.5401" stop-color="#992000"/><stop offset="0.7330" stop-color="#990700"/><stop offset="1.0000" stop-color="#990000"/></linearGradient><linearGradient id="f6" gradientUnits="userSpaceOnUse" x1="1031" y1="0" x2="1679" y2="0"><stop offset="0.0000" stop-color="#009909"/><stop offset="0.1667" stop-color="#009904"/><stop offset="0.1682" stop-color="#00ff06"/><stop offset="0.2253" stop-color="#30ff03"/><stop offset="0.2870" stop-color="#8bff00"/><stop offset="0.2886" stop-color="#559900"/><stop offset="0.3426" stop-color="#999700"/><stop offset="0.3796" stop-color="#996c00"/><stop offset="0.4244" stop-color="#994a00"/><stop offset="0.5494" stop-color="#991e00"/><stop offset="0.7407" stop-color="#990600"/><stop offset="1.0000" stop-color="#990000"/></linearGradient><linearGradient id="f7" gradientUnits="userSpaceOnUse" x1="1031" y1="0" x2="1679" y2="0"><stop offset="0.0000" stop-color="#00990b"/><stop offset="0.1682" stop-color="#009906"/><stop offset="0.1698" stop-color="#00ff0a"/><stop offset="0.2068" stop-color="#1bff08"/><stop offset="0.2500" stop-color="#4fff06"/><stop offset="0.2963" stop-color="#9cff03"/><stop offset="0.3395" stop-color="#fcff00"/><stop offset="0.3488" stop-color="#ffec00"/><stop offset="0.3503" stop-color="#998b00"/><stop offset="0.3858" stop-color="#996500"/><stop offset="0.4290" stop-color="#994700"/><stop offset="0.5478" stop-color="#991d00"/><stop offset="0.7392" stop-color="#990600"/><stop offset="1.0000" stop-color="#990000"/></linearGradient><linearGradient id="f8" gradientUnits="userSpaceOnUse" x1="1031" y1="0" x2="1679" y2="0"><stop offset="0.0000" stop-color="#00990e"/><stop offset="0.1698" stop-color="#009909"/><stop offset="0.1713" stop-color="#00ff0f"/><stop offset="0.2114" stop-color="#1fff0d"/><stop offset="0.2562" stop-color="#57ff0a"/><stop offset="0.2994" stop-color="#a2ff07"/><stop offset="0.3395" stop-color="#fdff04"/><stop offset="0.3719" stop-color="#ffbd02"/><stop offset="0.4090" stop-color="#ff8900"/><stop offset="0.4105" stop-color="#995100"/><stop offset="0.4938" stop-color="#992b00"/><stop offset="0.6127" stop-color="#991100"/><stop offset="1.0000" stop-color="#990000"/></linearGradient><linearGradient id="f9" gradientUnits="userSpaceOnUse" x1="1031" y1="0" x2="1679" y2="0"><stop offset="0.0000" stop-color="#009911"/><stop offset="0.1713" stop-color="#00990d"/><stop offset="0.1728" stop-color="#00ff15"/><stop offset="0.2130" stop-color="#1fff13"/><stop offset="0.2577" stop-color="#59ff10"/><stop offset="0.2994" stop-color="#a2ff0d"/><stop offset="0.3395" stop-color="#ffff0a"/><stop offset="0.3657" stop-color="#ffc606"/><stop offset="0.3951" stop-color="#ff9803"/><stop offset="0.4707" stop-color="#ff5300"/><stop offset="0.4722" stop-color="#993100"/><stop offset="0.6728" stop-color="#990a00"/><stop offset="1.0000" stop-color="#990000"/></linearGradient><linearGradient id="f10" gradientUnits="userSpaceOnUse" x1="1031" y1="0" x2="1679" y2="0"><stop offset="0.0000" stop-color="#009914"/><stop offset="0.1728" stop-color="#009910"/><stop offset="0.1744" stop-color="#00ff1b"/><stop offset="0.2145" stop-color="#20ff19"/><stop offset="0.2577" stop-color="#58ff16"/><stop offset="0.2994" stop-color="#a3ff14"/><stop offset="0.3395" stop-color="#fffe11"/><stop offset="0.3735" stop-color="#ffb70a"/><stop offset="0.4151" stop-color="#ff7f05"/><stop offset="0.4660" stop-color="#ff5502"/><stop offset="0.5309" stop-color="#ff3400"/><stop offset="0.5324" stop-color="#991f00"/><stop offset="0.7269" stop-color="#990500"/><stop offset="1.0000" stop-color="#990000"/></linearGradient><linearGradient id="f11" gradientUnits="userSpaceOnUse" x1="1031" y1="0" x2="1679" y2="0"><stop offset="0.0000" stop-color="#009917"/><stop offset="0.1744" stop-color="#009914"/><stop offset="0.1759" stop-color="#00ff21"/><stop offset="0.2145" stop-color="#1fff20"/><stop offset="0.2577" stop-color="#57ff1e"/><stop offset="0.2978" stop-color="#a0ff1b"/><stop offset="0.3395" stop-color="#fffc19"/><stop offset="0.3812" stop-color="#ffa90f"/><stop offset="0.4336" stop-color="#ff6c07"/><stop offset="0.5031" stop-color="#ff3f03"/><stop offset="0.5926" stop-color="#ff1f00"/><stop offset="0.5941" stop-color="#991200"/><stop offset="0.7762" stop-color="#990200"/><stop offset="1.0000" stop-color="#990000"/></linearGradient><linearGradient id="f12" gradientUnits="userSpaceOnUse" x1="1031" y1="0" x2="1679" y2="0"><stop offset="0.0000" stop-color="#00991b"/><stop offset="0.1759" stop-color="#009918"/><stop offset="0.1775" stop-color="#00ff28"/><stop offset="0.2160" stop-color="#1fff27"/><stop offset="0.2593" stop-color="#59ff25"/><stop offset="0.2994" stop-color="#a3ff24"/><stop offset="0.3380" stop-color="#ffff22"/><stop offset="0.3596" stop-color="#ffcd1a"/><stop offset="0.3858" stop-color="#ffa013"/><stop offset="0.4491" stop-color="#ff5e0a"/><stop offset="0.5355" stop-color="#ff3003"/><stop offset="0.6528" stop-color="#ff1200"/><stop offset="0.6543" stop-color="#990b00"/><stop offset="1.0000" stop-color="#990000"/></linearGradient><linearGradient id="f13" gradientUnits="userSpaceOnUse" x1="1031" y1="0" x2="1679" y2="0"><stop offset="0.0000" stop-color="#00991e"/><stop offset="0.1759" stop-color="#00991d"/><stop offset="0.1775" stop-color="#00ff30"/><stop offset="0.2145" stop-color="#1dff2f"/><stop offset="0.2577" stop-color="#56ff2e"/><stop offset="0.2978" stop-color="#a0ff2c"/><stop offset="0.3380" stop-color="#fffd2b"/><stop offset="0.3627" stop-color="#ffc521"/><stop offset="0.3904" stop-color="#ff9818"/><stop offset="0.4645" stop-color="#ff520c"/><stop offset="0.5679" stop-color="#ff2404"/><stop offset="0.7145" stop-color="#ff0900"/><stop offset="0.7160" stop-color="#990500"/><stop offset="1.0000" stop-color="#990000"/></linearGradient><linearGradient id="f14" gradientUnits="userSpaceOnUse" x1="1031" y1="0" x2="1679" y2="0"><stop offset="0.0000" stop-color="#009922"/><stop offset="0.1775" stop-color="#009921"/><stop offset="0.1790" stop-color="#00ff37"/><stop offset="0.2160" stop-color="#1dff37"/><stop offset="0.2577" stop-color="#55ff37"/><stop offset="0.2963" stop-color="#9dff36"/><stop offset="0.3380" stop-color="#fffc35"/><stop offset="0.3642" stop-color="#ffc028"/><stop offset="0.3966" stop-color="#ff8e1d"/><stop offset="0.4352" stop-color="#ff6614"/><stop offset="0.4799" stop-color="#ff470e"/><stop offset="0.6003" stop-color="#ff1b05"/><stop offset="0.7762" stop-color="#ff0300"/><stop offset="0.7778" stop-color="#990200"/><stop offset="1.0000" stop-color="#990000"/></linearGradient><linearGradient id="f15" gradientUnits="userSpaceOnUse" x1="1031" y1="0" x2="1679" y2="0"><stop offset="0.0000" stop-color="#009926"/><stop offset="0.1790" stop-color="#009926"/><stop offset="0.1806" stop-color="#00ff40"/><stop offset="0.2176" stop-color="#1eff40"/><stop offset="0.2593" stop-color="#57ff40"/><stop offset="0.2978" stop-color="#a0ff40"/><stop offset="0.3364" stop-color="#fffe40"/><stop offset="0.3642" stop-color="#ffbf30"/><stop offset="0.3981" stop-color="#ff8a23"/><stop offset="0.4398" stop-color="#ff6019"/><stop offset="0.4892" stop-color="#ff4010"/><stop offset="0.6250" stop-color="#ff1405"/><stop offset="0.8241" stop-color="#ff0000"/><stop offset="0.8256" stop-color="#990000"/><stop offset="1.0000" stop-color="#990000"/></linearGradient><linearGradient id="f16" gradientUnits="userSpaceOnUse" x1="1031" y1="0" x2="1679" y2="0"><stop offset="0.0000" stop-color="#00992a"/><stop offset="0.1806" stop-color="#00992c"/><stop offset="0.1821" stop-color="#00ff49"/><stop offset="0.2176" stop-color="#1dff49"/><stop offset="0.2593" stop-color="#56ff4a"/><stop offset="0.2978" stop-color="#a0ff4b"/><stop offset="0.3364" stop-color="#fffd4b"/><stop offset="0.3642" stop-color="#ffbd39"/><stop offset="0.3981" stop-color="#ff892a"/><stop offset="0.4383" stop-color="#ff601e"/><stop offset="0.4877" stop-color="#ff4015"/><stop offset="0.6219" stop-color="#ff1408"/><stop offset="0.8179" stop-color="#ff0001"/><stop offset="0.8194" stop-color="#990001"/><stop offset="1.0000" stop-color="#990000"/></linearGradient><linearGradient id="f17" gradientUnits="userSpaceOnUse" x1="1031" y1="0" x2="1679" y2="0"><stop offset="0.0000" stop-color="#00992e"/><stop offset="0.1821" stop-color="#009931"/><stop offset="0.1836" stop-color="#00ff52"/><stop offset="0.2191" stop-color="#1dff53"/><stop offset="0.2608" stop-color="#58ff55"/><stop offset="0.2994" stop-color="#a4ff57"/><stop offset="0.3349" stop-color="#ffff59"/><stop offset="0.3627" stop-color="#ffbe43"/><stop offset="0.3951" stop-color="#ff8b32"/><stop offset="0.4352" stop-color="#ff6125"/><stop offset="0.4830" stop-color="#ff411a"/><stop offset="0.6157" stop-color="#ff150a"/><stop offset="0.8102" stop-color="#ff0002"/><stop offset="0.8117" stop-color="#990001"/><stop offset="1.0000" stop-color="#990000"/></linearGradient><linearGradient id="f18" gradientUnits="userSpaceOnUse" x1="1031" y1="0" x2="1679" y2="0"><stop offset="0.0000" stop-color="#009933"/><stop offset="0.1836" stop-color="#009937"/><stop offset="0.1852" stop-color="#00ff5c"/><stop offset="0.2207" stop-color="#1eff5e"/><stop offset="0.2608" stop-color="#58ff60"/><stop offset="0.2978" stop-color="#a1ff63"/><stop offset="0.3349" stop-color="#fffe65"/><stop offset="0.3627" stop-color="#ffbc4d"/><stop offset="0.3951" stop-color="#ff893a"/><stop offset="0.4336" stop-color="#ff612b"/><stop offset="0.4815" stop-color="#ff401f"/><stop offset="0.6127" stop-color="#ff140d"/><stop offset="0.8040" stop-color="#ff0004"/><stop offset="0.8056" stop-color="#990002"/><stop offset="1.0000" stop-color="#990000"/></linearGradient><linearGradient id="f19" gradientUnits="userSpaceOnUse" x1="1031" y1="0" x2="1679" y2="0"><stop offset="0.0000" stop-color="#009938"/><stop offset="0.1852" stop-color="#00993d"/><stop offset="0.1867" stop-color="#00ff66"/><stop offset="0.2222" stop-color="#1fff69"/><stop offset="0.2608" stop-color="#57ff6c"/><stop offset="0.2963" stop-color="#9dff70"/><stop offset="0.3349" stop-color="#fffc73"/><stop offset="0.3611" stop-color="#ffbd59"/><stop offset="0.3935" stop-color="#ff8943"/><stop offset="0.4321" stop-color="#ff6032"/><stop offset="0.4799" stop-color="#ff4024"/><stop offset="0.6080" stop-color="#ff1410"/><stop offset="0.7963" stop-color="#ff0005"/><stop offset="0.7978" stop-color="#990003"/><stop offset="1.0000" stop-color="#990000"/></linearGradient><linearGradient id="f20" gradientUnits="userSpaceOnUse" x1="1031" y1="0" x2="1679" y2="0"><stop offset="0.0000" stop-color="#00993c"/><stop offset="0.1867" stop-color="#009944"/><stop offset="0.1883" stop-color="#00ff71"/><stop offset="0.2238" stop-color="#1fff75"/><stop offset="0.2623" stop-color="#59ff79"/><stop offset="0.2994" stop-color="#a5ff7e"/><stop offset="0.3333" stop-color="#ffff83"/><stop offset="0.3596" stop-color="#ffbe65"/><stop offset="0.3904" stop-color="#ff8b4d"/><stop offset="0.4290" stop-color="#ff613a"/><stop offset="0.4753" stop-color="#ff412a"/><stop offset="0.6034" stop-color="#ff1414"/><stop offset="0.7901" stop-color="#ff0007"/><stop offset="0.7917" stop-color="#990004"/><stop offset="1.0000" stop-color="#990001"/></linearGradient><linearGradient id="f21" gradientUnits="userSpaceOnUse" x1="1031" y1="0" x2="1679" y2="0"><stop offset="0.0000" stop-color="#009941"/><stop offset="0.1883" stop-color="#00994b"/><stop offset="0.1898" stop-color="#00ff7d"/><stop offset="0.2238" stop-color="#1eff81"/><stop offset="0.2623" stop-color="#58ff86"/><stop offset="0.2978" stop-color="#a1ff8c"/><stop offset="0.3333" stop-color="#fffd92"/><stop offset="0.3596" stop-color="#ffbc71"/><stop offset="0.3904" stop-color="#ff8a56"/><stop offset="0.4275" stop-color="#ff6141"/><stop offset="0.4738" stop-color="#ff4030"/><stop offset="0.5988" stop-color="#ff1417"/><stop offset="0.7824" stop-color="#ff0009"/><stop offset="0.7840" stop-color="#990005"/><stop offset="1.0000" stop-color="#990001"/></linearGradient><linearGradient id="f22" gradientUnits="userSpaceOnUse" x1="1031" y1="0" x2="1679" y2="0"><stop offset="0.0000" stop-color="#009946"/><stop offset="0.1898" stop-color="#009952"/><stop offset="0.1914" stop-color="#00ff89"/><stop offset="0.2253" stop-color="#1fff8e"/><stop offset="0.2623" stop-color="#57ff94"/><stop offset="0.2963" stop-color="#9eff9b"/><stop offset="0.3333" stop-color="#fffba1"/><stop offset="0.3596" stop-color="#ffba7d"/><stop offset="0.3904" stop-color="#ff8860"/><stop offset="0.4275" stop-color="#ff5f49"/><stop offset="0.4722" stop-color="#ff4036"/><stop offset="0.5957" stop-color="#ff141b"/><stop offset="0.7762" stop-color="#ff000b"/><stop offset="0.7778" stop-color="#990007"/><stop offset="1.0000" stop-color="#990002"/></linearGradient><linearGradient id="f23" gradientUnits="userSpaceOnUse" x1="1031" y1="0" x2="1679" y2="0"><stop offset="0.0000" stop-color="#00994c"/><stop offset="0.1914" stop-color="#00995a"/><stop offset="0.1929" stop-color="#00ff96"/><stop offset="0.2269" stop-color="#20ff9c"/><stop offset="0.2639" stop-color="#59ffa3"/><stop offset="0.2978" stop-color="#a2ffac"/><stop offset="0.3318" stop-color="#fffeb4"/><stop offset="0.3565" stop-color="#ffbf8d"/><stop offset="0.3873" stop-color="#ff8a6c"/><stop offset="0.4228" stop-color="#ff6253"/><stop offset="0.4676" stop-color="#ff413e"/><stop offset="0.5895" stop-color="#ff151f"/><stop offset="0.7685" stop-color="#ff000d"/><stop offset="0.7701" stop-color="#990008"/><stop offset="1.0000" stop-color="#990003"/></linearGradient><linearGradient id="f24" gradientUnits="userSpaceOnUse" x1="1031" y1="0" x2="1679" y2="0"><stop offset="0.0000" stop-color="#009951"/><stop offset="0.1929" stop-color="#009962"/><stop offset="0.1944" stop-color="#00ffa3"/><stop offset="0.2269" stop-color="#1fffaa"/><stop offset="0.2639" stop-color="#58ffb3"/><stop offset="0.2963" stop-color="#9effbc"/><stop offset="0.3318" stop-color="#fffcc6"/><stop offset="0.3565" stop-color="#ffbd9b"/><stop offset="0.3858" stop-color="#ff8a78"/><stop offset="0.4213" stop-color="#ff615c"/><stop offset="0.4660" stop-color="#ff4045"/><stop offset="0.5864" stop-color="#ff1424"/><stop offset="0.7623" stop-color="#ff0010"/><stop offset="0.7639" stop-color="#990009"/><stop offset="1.0000" stop-color="#990003"/></linearGradient><linearGradient id="f25" gradientUnits="userSpaceOnUse" x1="1031" y1="0" x2="1679" y2="0"><stop offset="0.0000" stop-color="#009957"/><stop offset="0.1944" stop-color="#00996a"/><stop offset="0.1960" stop-color="#00ffb1"/><stop offset="0.2284" stop-color="#1fffb9"/><stop offset="0.2639" stop-color="#58ffc3"/><stop offset="0.2978" stop-color="#a2ffce"/><stop offset="0.3302" stop-color="#feffdb"/><stop offset="0.3549" stop-color="#ffbeab"/><stop offset="0.3843" stop-color="#ff8a85"/><stop offset="0.4198" stop-color="#ff6166"/><stop offset="0.4630" stop-color="#ff414c"/><stop offset="0.5818" stop-color="#ff1428"/><stop offset="0.7546" stop-color="#ff0013"/><stop offset="0.7562" stop-color="#99000b"/><stop offset="1.0000" stop-color="#990004"/></linearGradient><linearGradient id="f26" gradientUnits="userSpaceOnUse" x1="1031" y1="0" x2="1679" y2="0"><stop offset="0.0000" stop-color="#00995d"/><stop offset="0.1960" stop-color="#009973"/><stop offset="0.1975" stop-color="#00ffc0"/><stop offset="0.2284" stop-color="#1effc9"/><stop offset="0.2639" stop-color="#57ffd4"/><stop offset="0.2978" stop-color="#a2ffe1"/><stop offset="0.3302" stop-color="#fffeee"/><stop offset="0.3534" stop-color="#ffbfbd"/><stop offset="0.3827" stop-color="#ff8b92"/><stop offset="0.4182" stop-color="#ff6170"/><stop offset="0.4599" stop-color="#ff4155"/><stop offset="0.5756" stop-color="#ff152d"/><stop offset="0.7469" stop-color="#ff0015"/><stop offset="0.7485" stop-color="#99000d"/><stop offset="1.0000" stop-color="#990005"/></linearGradient><linearGradient id="f27" gradientUnits="userSpaceOnUse" x1="1031" y1="0" x2="1679" y2="0"><stop offset="0.0000" stop-color="#009963"/><stop offset="0.1975" stop-color="#00997c"/><stop offset="0.1991" stop-color="#00ffd0"/><stop offset="0.2299" stop-color="#1fffda"/><stop offset="0.2639" stop-color="#56ffe6"/><stop offset="0.2932" stop-color="#97fff3"/><stop offset="0.3318" stop-color="#fff7fe"/><stop offset="0.3549" stop-color="#ffbac9"/><stop offset="0.3843" stop-color="#ff869c"/><stop offset="0.4182" stop-color="#ff5f79"/><stop offset="0.4599" stop-color="#ff3f5c"/><stop offset="0.5741" stop-color="#ff1432"/><stop offset="0.7407" stop-color="#ff0018"/><stop offset="0.7423" stop-color="#99000f"/><stop offset="1.0000" stop-color="#990005"/></linearGradient><linearGradient id="f28" gradientUnits="userSpaceOnUse" x1="1031" y1="0" x2="1679" y2="0"><stop offset="0.0000" stop-color="#009969"/><stop offset="0.1991" stop-color="#009986"/><stop offset="0.2006" stop-color="#00ffe0"/><stop offset="0.2269" stop-color="#19ffea"/><stop offset="0.2577" stop-color="#49fff6"/><stop offset="0.2762" stop-color="#6fffff"/><stop offset="0.3395" stop-color="#ffdefd"/><stop offset="0.3627" stop-color="#ffa8ca"/><stop offset="0.3920" stop-color="#ff7a9e"/><stop offset="0.4660" stop-color="#ff3a60"/><stop offset="0.5756" stop-color="#ff1336"/><stop offset="0.7330" stop-color="#ff001c"/><stop offset="0.7346" stop-color="#990011"/><stop offset="1.0000" stop-color="#990006"/></linearGradient><linearGradient id="f29" gradientUnits="userSpaceOnUse" x1="1031" y1="0" x2="1679" y2="0"><stop offset="0.0000" stop-color="#009970"/><stop offset="0.2006" stop-color="#009991"/><stop offset="0.2022" stop-color="#00fff1"/><stop offset="0.2299" stop-color="#1cfffd"/><stop offset="0.2685" stop-color="#58f0ff"/><stop offset="0.3071" stop-color="#a4deff"/><stop offset="0.3457" stop-color="#fecbff"/><stop offset="0.3704" stop-color="#ff98cb"/><stop offset="0.3981" stop-color="#ff70a2"/><stop offset="0.4707" stop-color="#ff3664"/><stop offset="0.5772" stop-color="#ff113a"/><stop offset="0.7269" stop-color="#ff001f"/><stop offset="0.7284" stop-color="#990012"/><stop offset="1.0000" stop-color="#990007"/></linearGradient><linearGradient id="f30" gradientUnits="userSpaceOnUse" x1="1031" y1="0" x2="1679" y2="0"><stop offset="0.0000" stop-color="#009977"/><stop offset="0.2022" stop-color="#009799"/><stop offset="0.2037" stop-color="#01fbff"/><stop offset="0.2346" stop-color="#1fedff"/><stop offset="0.2716" stop-color="#56ddff"/><stop offset="0.3117" stop-color="#a2cbff"/><stop offset="0.3534" stop-color="#ffb7fe"/><stop offset="0.3765" stop-color="#ff8ccf"/><stop offset="0.4043" stop-color="#ff67a6"/><stop offset="0.4769" stop-color="#ff3168"/><stop offset="0.5772" stop-color="#ff113e"/><stop offset="0.7191" stop-color="#ff0023"/><stop offset="0.7207" stop-color="#990015"/><stop offset="1.0000" stop-color="#990008"/></linearGradient><linearGradient id="f31" gradientUnits="userSpaceOnUse" x1="1031" y1="0" x2="1679" y2="0"><stop offset="0.0000" stop-color="#00997e"/><stop offset="0.1512" stop-color="#009999"/><stop offset="0.2037" stop-color="#008c99"/><stop offset="0.2052" stop-color="#01e9ff"/><stop offset="0.2361" stop-color="#1dddff"/><stop offset="0.2762" stop-color="#57ccff"/><stop offset="0.3611" stop-color="#ffa4fd"/><stop offset="0.4120" stop-color="#ff5da8"/><stop offset="0.4815" stop-color="#ff2e6c"/><stop offset="0.5772" stop-color="#ff1043"/><stop offset="0.7130" stop-color="#ff0026"/><stop offset="0.7145" stop-color="#990017"/><stop offset="1.0000" stop-color="#990009"/></linearGradient><linearGradient id="f32" gradientUnits="userSpaceOnUse" x1="1031" y1="0" x2="1679" y2="0"><stop offset="0.0000" stop-color="#009985"/><stop offset="0.1096" stop-color="#009999"/><stop offset="0.2037" stop-color="#008399"/><stop offset="0.2052" stop-color="#00daff"/><stop offset="0.2377" stop-color="#1ccdff"/><stop offset="0.2778" stop-color="#53bdff"/><stop offset="0.3688" stop-color="#ff94fc"/><stop offset="0.4182" stop-color="#ff55ac"/><stop offset="0.4861" stop-color="#ff2a70"/><stop offset="0.5787" stop-color="#ff0e47"/><stop offset="0.7052" stop-color="#ff002b"/><stop offset="0.7068" stop-color="#990019"/><stop offset="1.0000" stop-color="#99000a"/></linearGradient><linearGradient id="f33" gradientUnits="userSpaceOnUse" x1="1031" y1="0" x2="1679" y2="0"><stop offset="0.0000" stop-color="#00998c"/><stop offset="0.0679" stop-color="#009999"/><stop offset="0.2052" stop-color="#007b99"/><stop offset="0.2068" stop-color="#00ccff"/><stop offset="0.2407" stop-color="#1dbfff"/><stop offset="0.2840" stop-color="#56aeff"/><stop offset="0.3287" stop-color="#a29bff"/><stop offset="0.3750" stop-color="#ff87ff"/><stop offset="0.4244" stop-color="#ff4eaf"/><stop offset="0.4907" stop-color="#ff2775"/><stop offset="0.5787" stop-color="#ff0d4c"/><stop offset="0.6991" stop-color="#ff002f"/><stop offset="0.7006" stop-color="#99001c"/><stop offset="1.0000" stop-color="#99000a"/></linearGradient><linearGradient id="f34" gradientUnits="userSpaceOnUse" x1="1031" y1="0" x2="1679" y2="0"><stop offset="0.0000" stop-color="#009994"/><stop offset="0.2068" stop-color="#007399"/><stop offset="0.2083" stop-color="#00bfff"/><stop offset="0.2423" stop-color="#1cb2ff"/><stop offset="0.2870" stop-color="#55a1ff"/><stop offset="0.3333" stop-color="#a08eff"/><stop offset="0.3827" stop-color="#ff7afe"/><stop offset="0.4306" stop-color="#ff47b2"/><stop offset="0.4938" stop-color="#ff247a"/><stop offset="0.5787" stop-color="#ff0c51"/><stop offset="0.6914" stop-color="#ff0033"/><stop offset="0.6929" stop-color="#99001f"/><stop offset="1.0000" stop-color="#99000b"/></linearGradient><linearGradient id="f35" gradientUnits="userSpaceOnUse" x1="1031" y1="0" x2="1679" y2="0"><stop offset="0.0000" stop-color="#009699"/><stop offset="0.2083" stop-color="#006c99"/><stop offset="0.2099" stop-color="#00b3ff"/><stop offset="0.2454" stop-color="#1ca6ff"/><stop offset="0.2917" stop-color="#5594ff"/><stop offset="0.3904" stop-color="#ff6dfd"/><stop offset="0.4367" stop-color="#ff41b5"/><stop offset="0.4985" stop-color="#ff217e"/><stop offset="0.5787" stop-color="#ff0c56"/><stop offset="0.6852" stop-color="#ff0038"/><stop offset="0.6867" stop-color="#990021"/><stop offset="1.0000" stop-color="#99000c"/></linearGradient><linearGradient id="f36" gradientUnits="userSpaceOnUse" x1="1031" y1="0" x2="1679" y2="0"><stop offset="0.0000" stop-color="#008f99"/><stop offset="0.2099" stop-color="#006599"/><stop offset="0.2114" stop-color="#00a8ff"/><stop offset="0.2485" stop-color="#1d9aff"/><stop offset="0.2963" stop-color="#5689ff"/><stop offset="0.3457" stop-color="#a277ff"/><stop offset="0.3966" stop-color="#ff63ff"/><stop offset="0.4429" stop-color="#ff3bb8"/><stop offset="0.5015" stop-color="#ff1e83"/><stop offset="0.5787" stop-color="#ff0b5b"/><stop offset="0.6775" stop-color="#ff003d"/><stop offset="0.6790" stop-color="#990024"/><stop offset="1.0000" stop-color="#99000d"/></linearGradient><linearGradient id="f37" gradientUnits="userSpaceOnUse" x1="1031" y1="0" x2="1679" y2="0"><stop offset="0.0000" stop-color="#008899"/><stop offset="0.2114" stop-color="#005f99"/><stop offset="0.2130" stop-color="#009dff"/><stop offset="0.2515" stop-color="#1d90ff"/><stop offset="0.3009" stop-color="#577fff"/><stop offset="0.3503" stop-color="#a06dff"/><stop offset="0.4043" stop-color="#ff59fe"/><stop offset="0.4491" stop-color="#ff35bb"/><stop offset="0.5062" stop-color="#ff1b87"/><stop offset="0.5787" stop-color="#ff0a60"/><stop offset="0.6713" stop-color="#ff0042"/><stop offset="0.6728" stop-color="#990028"/><stop offset="1.0000" stop-color="#99000e"/></linearGradient><linearGradient id="f38" gradientUnits="userSpaceOnUse" x1="1031" y1="0" x2="1679" y2="0"><stop offset="0.0000" stop-color="#008199"/><stop offset="0.2130" stop-color="#005999"/><stop offset="0.2145" stop-color="#0094ff"/><stop offset="0.2531" stop-color="#1c87ff"/><stop offset="0.3040" stop-color="#5575ff"/><stop offset="0.4120" stop-color="#ff4ffd"/><stop offset="0.4552" stop-color="#ff30be"/><stop offset="0.5093" stop-color="#ff198c"/><stop offset="0.5772" stop-color="#ff0966"/><stop offset="0.6636" stop-color="#ff0048"/><stop offset="0.6651" stop-color="#99002b"/><stop offset="1.0000" stop-color="#99000f"/></linearGradient><linearGradient id="f39" gradientUnits="userSpaceOnUse" x1="1031" y1="0" x2="1679" y2="0"><stop offset="0.0000" stop-color="#007b99"/><stop offset="0.2145" stop-color="#005499"/><stop offset="0.2160" stop-color="#008bff"/><stop offset="0.2562" stop-color="#1c7eff"/><stop offset="0.3086" stop-color="#566cff"/><stop offset="0.3627" stop-color="#a25aff"/><stop offset="0.4182" stop-color="#ff47ff"/><stop offset="0.4614" stop-color="#ff2bc1"/><stop offset="0.5123" stop-color="#ff1792"/><stop offset="0.5772" stop-color="#ff086b"/><stop offset="0.6574" stop-color="#ff004e"/><stop offset="0.6590" stop-color="#99002e"/><stop offset="1.0000" stop-color="#990010"/></linearGradient><linearGradient id="f40" gradientUnits="userSpaceOnUse" x1="1031" y1="0" x2="1679" y2="0"><stop offset="0.0000" stop-color="#007599"/><stop offset="0.2160" stop-color="#004f99"/><stop offset="0.2176" stop-color="#0082ff"/><stop offset="0.2593" stop-color="#1d75ff"/><stop offset="0.3133" stop-color="#5764ff"/><stop offset="0.3688" stop-color="#a252ff"/><stop offset="0.4259" stop-color="#ff3fff"/><stop offset="0.4660" stop-color="#ff27c5"/><stop offset="0.5154" stop-color="#ff1597"/><stop offset="0.5756" stop-color="#ff0872"/><stop offset="0.6497" stop-color="#ff0054"/><stop offset="0.6512" stop-color="#990032"/><stop offset="1.0000" stop-color="#990011"/></linearGradient><linearGradient id="f41" gradientUnits="userSpaceOnUse" x1="1031" y1="0" x2="1679" y2="0"><stop offset="0.0000" stop-color="#007099"/><stop offset="0.2176" stop-color="#004a99"/><stop offset="0.2191" stop-color="#007bff"/><stop offset="0.2623" stop-color="#1d6dff"/><stop offset="0.3164" stop-color="#555dff"/><stop offset="0.3719" stop-color="#9f4bff"/><stop offset="0.4336" stop-color="#ff38fe"/><stop offset="0.4722" stop-color="#ff23c8"/><stop offset="0.5185" stop-color="#ff129c"/><stop offset="0.6435" stop-color="#ff005b"/><stop offset="0.6451" stop-color="#990036"/><stop offset="1.0000" stop-color="#990012"/></linearGradient><linearGradient id="f42" gradientUnits="userSpaceOnUse" x1="1031" y1="0" x2="1679" y2="0"><stop offset="0.0000" stop-color="#006b99"/><stop offset="0.2191" stop-color="#004599"/><stop offset="0.2207" stop-color="#0073ff"/><stop offset="0.2654" stop-color="#1e66ff"/><stop offset="0.3210" stop-color="#5655ff"/><stop offset="0.3796" stop-color="#a244ff"/><stop offset="0.4398" stop-color="#fe32ff"/><stop offset="0.4784" stop-color="#ff1eca"/><stop offset="0.5216" stop-color="#ff10a1"/><stop offset="0.6358" stop-color="#ff0062"/><stop offset="0.6373" stop-color="#99003a"/><stop offset="0.7870" stop-color="#990023"/><stop offset="1.0000" stop-color="#990014"/></linearGradient><linearGradient id="f43" gradientUnits="userSpaceOnUse" x1="1031" y1="0" x2="1679" y2="0"><stop offset="0.0000" stop-color="#006699"/><stop offset="0.2207" stop-color="#004199"/><stop offset="0.2222" stop-color="#006dff"/><stop offset="0.2685" stop-color="#1e5fff"/><stop offset="0.3256" stop-color="#574fff"/><stop offset="0.3858" stop-color="#a23dff"/><stop offset="0.4475" stop-color="#ff2cff"/><stop offset="0.4830" stop-color="#ff1bce"/><stop offset="0.5231" stop-color="#ff0fa7"/><stop offset="0.6296" stop-color="#ff0069"/><stop offset="0.6312" stop-color="#99003f"/><stop offset="0.7824" stop-color="#990025"/><stop offset="1.0000" stop-color="#990015"/></linearGradient><linearGradient id="f44" gradientUnits="userSpaceOnUse" x1="1031" y1="0" x2="1679" y2="0"><stop offset="0.0000" stop-color="#006199"/><stop offset="0.2222" stop-color="#003e99"/><stop offset="0.2238" stop-color="#0066ff"/><stop offset="0.2701" stop-color="#1d59ff"/><stop offset="0.3287" stop-color="#5549ff"/><stop offset="0.3904" stop-color="#a138ff"/><stop offset="0.4552" stop-color="#ff26fe"/><stop offset="0.5262" stop-color="#ff0dac"/><stop offset="0.6219" stop-color="#ff0071"/><stop offset="0.6235" stop-color="#990044"/><stop offset="0.7778" stop-color="#990028"/><stop offset="1.0000" stop-color="#990016"/></linearGradient><linearGradient id="f45" gradientUnits="userSpaceOnUse" x1="1031" y1="0" x2="1679" y2="0"><stop offset="0.0000" stop-color="#005d99"/><stop offset="0.2238" stop-color="#003a99"/><stop offset="0.2253" stop-color="#0060ff"/><stop offset="0.2731" stop-color="#1d53ff"/><stop offset="0.3333" stop-color="#5643ff"/><stop offset="0.3966" stop-color="#a232ff"/><stop offset="0.4614" stop-color="#fe21ff"/><stop offset="0.5278" stop-color="#ff0cb3"/><stop offset="0.6142" stop-color="#ff007a"/><stop offset="0.6157" stop-color="#990049"/><stop offset="0.7716" stop-color="#99002b"/><stop offset="1.0000" stop-color="#990017"/></linearGradient><linearGradient id="f46" gradientUnits="userSpaceOnUse" x1="1031" y1="0" x2="1679" y2="0"><stop offset="0.0000" stop-color="#005999"/><stop offset="0.2253" stop-color="#003799"/><stop offset="0.2269" stop-color="#005bff"/><stop offset="0.2762" stop-color="#1e4eff"/><stop offset="0.3380" stop-color="#573dff"/><stop offset="0.4028" stop-color="#a22dff"/><stop offset="0.4691" stop-color="#ff1cff"/><stop offset="0.5309" stop-color="#ff0ab8"/><stop offset="0.6080" stop-color="#ff0083"/><stop offset="0.6096" stop-color="#99004e"/><stop offset="0.7670" stop-color="#99002d"/><stop offset="1.0000" stop-color="#990018"/></linearGradient><linearGradient id="f47" gradientUnits="userSpaceOnUse" x1="1031" y1="0" x2="1679" y2="0"><stop offset="0.0000" stop-color="#005599"/><stop offset="0.2269" stop-color="#003399"/><stop offset="0.2284" stop-color="#0055ff"/><stop offset="0.2793" stop-color="#1e48ff"/><stop offset="0.3426" stop-color="#5738ff"/><stop offset="0.4074" stop-color="#a128ff"/><stop offset="0.4769" stop-color="#ff17ff"/><stop offset="0.5324" stop-color="#ff08be"/><stop offset="0.6003" stop-color="#ff008d"/><stop offset="0.6019" stop-color="#990054"/><stop offset="0.7608" stop-color="#990030"/><stop offset="1.0000" stop-color="#990019"/></linearGradient><linearGradient id="f48" gradientUnits="userSpaceOnUse" x1="1031" y1="0" x2="1679" y2="0"><stop offset="0.0000" stop-color="#005299"/><stop offset="0.2284" stop-color="#003099"/><stop offset="0.2299" stop-color="#0050ff"/><stop offset="0.2809" stop-color="#1d44ff"/><stop offset="0.3457" stop-color="#5634ff"/><stop offset="0.4120" stop-color="#a024ff"/><stop offset="0.4846" stop-color="#ff13fe"/><stop offset="0.5340" stop-color="#ff07c4"/><stop offset="0.5941" stop-color="#ff0096"/><stop offset="0.5957" stop-color="#99005a"/><stop offset="0.7562" stop-color="#990033"/><stop offset="1.0000" stop-color="#99001a"/></linearGradient><linearGradient id="f49" gradientUnits="userSpaceOnUse" x1="1031" y1="0" x2="1679" y2="0"><stop offset="0.0000" stop-color="#004e99"/><stop offset="0.2299" stop-color="#002e99"/><stop offset="0.2315" stop-color="#004cff"/><stop offset="0.2840" stop-color="#1d3fff"/><stop offset="0.3503" stop-color="#562fff"/><stop offset="0.4198" stop-color="#a21fff"/><stop offset="0.4907" stop-color="#ff10ff"/><stop offset="0.5355" stop-color="#ff06cb"/><stop offset="0.5864" stop-color="#ff00a1"/><stop offset="0.5880" stop-color="#990060"/><stop offset="0.7515" stop-color="#990036"/><stop offset="1.0000" stop-color="#99001c"/></linearGradient><linearGradient id="f50" gradientUnits="userSpaceOnUse" x1="1031" y1="0" x2="1679" y2="0"><stop offset="0.0000" stop-color="#004b99"/><stop offset="0.2315" stop-color="#002b99"/><stop offset="0.2330" stop-color="#0047ff"/><stop offset="0.2870" stop-color="#1e3bff"/><stop offset="0.3549" stop-color="#572bff"/><stop offset="0.4259" stop-color="#a31bff"/><stop offset="0.4985" stop-color="#ff0dff"/><stop offset="0.5802" stop-color="#ff00ac"/><stop offset="0.5818" stop-color="#990067"/><stop offset="0.7454" stop-color="#990039"/><stop offset="1.0000" stop-color="#99001d"/></linearGradient><linearGradient id="f51" gradientUnits="userSpaceOnUse" x1="1031" y1="0" x2="1679" y2="0"><stop offset="0.0000" stop-color="#004899"/><stop offset="0.2330" stop-color="#002899"/><stop offset="0.2346" stop-color="#0043ff"/><stop offset="0.2901" stop-color="#1e37ff"/><stop offset="0.3596" stop-color="#5727ff"/><stop offset="0.4321" stop-color="#a318ff"/><stop offset="0.5046" stop-color="#fe0aff"/><stop offset="0.5725" stop-color="#ff00b9"/><stop offset="0.5741" stop-color="#99006e"/><stop offset="0.7392" stop-color="#99003c"/><stop offset="1.0000" stop-color="#99001e"/></linearGradient><linearGradient id="f52" gradientUnits="userSpaceOnUse" x1="1031" y1="0" x2="1679" y2="0"><stop offset="0.0000" stop-color="#004599"/><stop offset="0.2330" stop-color="#002699"/><stop offset="0.2346" stop-color="#0040ff"/><stop offset="0.2901" stop-color="#1c33ff"/><stop offset="0.3611" stop-color="#5524ff"/><stop offset="0.4367" stop-color="#a215ff"/><stop offset="0.5123" stop-color="#fe07ff"/><stop offset="0.5664" stop-color="#ff00c5"/><stop offset="0.5679" stop-color="#990076"/><stop offset="0.7346" stop-color="#990040"/><stop offset="1.0000" stop-color="#99001f"/></linearGradient><linearGradient id="f53" gradientUnits="userSpaceOnUse" x1="1031" y1="0" x2="1679" y2="0"><stop offset="0.0000" stop-color="#004299"/><stop offset="0.2346" stop-color="#002499"/><stop offset="0.2361" stop-color="#003cff"/><stop offset="0.2932" stop-color="#1d30ff"/><stop offset="0.3657" stop-color="#5521ff"/><stop offset="0.4429" stop-color="#a312ff"/><stop offset="0.5201" stop-color="#ff04ff"/><stop offset="0.5586" stop-color="#ff00d4"/><stop offset="0.5602" stop-color="#99007e"/><stop offset="0.6343" stop-color="#99005d"/><stop offset="0.7284" stop-color="#990043"/><stop offset="1.0000" stop-color="#990021"/></linearGradient><linearGradient id="f54" gradientUnits="userSpaceOnUse" x1="1031" y1="0" x2="1679" y2="0"><stop offset="0.0000" stop-color="#003f99"/><stop offset="0.2361" stop-color="#002299"/><stop offset="0.2377" stop-color="#0038ff"/><stop offset="0.2963" stop-color="#1d2cff"/><stop offset="0.3704" stop-color="#561dff"/><stop offset="0.4475" stop-color="#a10fff"/><stop offset="0.5262" stop-color="#fe03ff"/><stop offset="0.5525" stop-color="#ff00e2"/><stop offset="0.5540" stop-color="#990087"/><stop offset="0.6281" stop-color="#990063"/><stop offset="0.7238" stop-color="#990047"/><stop offset="1.0000" stop-color="#990022"/></linearGradient><linearGradient id="f55" gradientUnits="userSpaceOnUse" x1="1031" y1="0" x2="1679" y2="0"><stop offset="0.0000" stop-color="#003d99"/><stop offset="0.2377" stop-color="#002099"/><stop offset="0.2392" stop-color="#0035ff"/><stop offset="0.2932" stop-color="#192aff"/><stop offset="0.3642" stop-color="#4d1cff"/><stop offset="0.4475" stop-color="#9c0dff"/><stop offset="0.5340" stop-color="#fe01ff"/><stop offset="0.5448" stop-color="#ff00f3"/><stop offset="0.5463" stop-color="#990091"/><stop offset="0.6219" stop-color="#990069"/><stop offset="0.7176" stop-color="#99004b"/><stop offset="1.0000" stop-color="#990023"/></linearGradient><linearGradient id="f56" gradientUnits="userSpaceOnUse" x1="1031" y1="0" x2="1679" y2="0"><stop offset="0.0000" stop-color="#003a99"/><stop offset="0.2392" stop-color="#001e99"/><stop offset="0.2407" stop-color="#0032ff"/><stop offset="0.3009" stop-color="#1c26ff"/><stop offset="0.3765" stop-color="#5418ff"/><stop offset="0.4568" stop-color="#9f0aff"/><stop offset="0.5386" stop-color="#fb00ff"/><stop offset="0.5401" stop-color="#980099"/><stop offset="0.6188" stop-color="#99006e"/><stop offset="0.7145" stop-color="#99004e"/><stop offset="1.0000" stop-color="#990024"/></linearGradient><linearGradient id="f57" gradientUnits="userSpaceOnUse" x1="1031" y1="0" x2="1679" y2="0"><stop offset="0.0000" stop-color="#003899"/><stop offset="0.2407" stop-color="#001c99"/><stop offset="0.2423" stop-color="#002fff"/><stop offset="0.2994" stop-color="#1a24ff"/><stop offset="0.3735" stop-color="#4e17ff"/><stop offset="0.5309" stop-color="#ea00ff"/><stop offset="0.5324" stop-color="#8d0099"/><stop offset="0.5494" stop-color="#990099"/><stop offset="0.6265" stop-color="#99006e"/><stop offset="0.7269" stop-color="#99004e"/><stop offset="1.0000" stop-color="#990026"/></linearGradient><linearGradient id="f58" gradientUnits="userSpaceOnUse" x1="1031" y1="0" x2="1679" y2="0"><stop offset="0.0000" stop-color="#003699"/><stop offset="0.2423" stop-color="#001b99"/><stop offset="0.2438" stop-color="#002cff"/><stop offset="0.2994" stop-color="#1822ff"/><stop offset="0.3719" stop-color="#4a15ff"/><stop offset="0.5247" stop-color="#db00ff"/><stop offset="0.5262" stop-color="#840099"/><stop offset="0.5571" stop-color="#990099"/><stop offset="0.6373" stop-color="#99006d"/><stop offset="0.7392" stop-color="#99004d"/><stop offset="1.0000" stop-color="#990027"/></linearGradient><linearGradient id="f59" gradientUnits="userSpaceOnUse" x1="1031" y1="0" x2="1679" y2="0"><stop offset="0.0000" stop-color="#003499"/><stop offset="0.2438" stop-color="#001999"/><stop offset="0.2454" stop-color="#0029ff"/><stop offset="0.2994" stop-color="#1720ff"/><stop offset="0.3688" stop-color="#4514ff"/><stop offset="0.5170" stop-color="#cb00ff"/><stop offset="0.5185" stop-color="#7b0099"/><stop offset="0.5648" stop-color="#990098"/><stop offset="0.6389" stop-color="#990070"/><stop offset="0.7315" stop-color="#990052"/><stop offset="1.0000" stop-color="#990029"/></linearGradient><linearGradient id="f60" gradientUnits="userSpaceOnUse" x1="1031" y1="0" x2="1679" y2="0"><stop offset="0.0000" stop-color="#003299"/><stop offset="0.2454" stop-color="#001799"/><stop offset="0.2469" stop-color="#0027ff"/><stop offset="0.3657" stop-color="#4013ff"/><stop offset="0.5108" stop-color="#be00ff"/><stop offset="0.5123" stop-color="#730099"/><stop offset="0.5710" stop-color="#990099"/><stop offset="0.6435" stop-color="#990072"/><stop offset="0.7361" stop-color="#990053"/><stop offset="1.0000" stop-color="#99002a"/></linearGradient><linearGradient id="f61" gradientUnits="userSpaceOnUse" x1="1031" y1="0" x2="1679" y2="0"><stop offset="0.0000" stop-color="#003099"/><stop offset="0.2469" stop-color="#001699"/><stop offset="0.2485" stop-color="#0024ff"/><stop offset="0.3627" stop-color="#3b11ff"/><stop offset="0.5031" stop-color="#b100ff"/><stop offset="0.5046" stop-color="#6b0099"/><stop offset="0.5787" stop-color="#990099"/><stop offset="0.6512" stop-color="#990072"/><stop offset="0.7423" stop-color="#990054"/><stop offset="1.0000" stop-color="#99002b"/></linearGradient><linearGradient id="f62" gradientUnits="userSpaceOnUse" x1="1031" y1="0" x2="1679" y2="0"><stop offset="0.0000" stop-color="#002e99"/><stop offset="0.2485" stop-color="#001499"/><stop offset="0.2500" stop-color="#0022ff"/><stop offset="0.3611" stop-color="#3810ff"/><stop offset="0.4969" stop-color="#a500ff"/><stop offset="0.4985" stop-color="#640099"/><stop offset="0.5864" stop-color="#990098"/><stop offset="0.6590" stop-color="#990073"/><stop offset="0.7485" stop-color="#990055"/><stop offset="1.0000" stop-color="#99002d"/></linearGradient><linearGradient id="f63" gradientUnits="userSpaceOnUse" x1="1031" y1="0" x2="1679" y2="0"><stop offset="0.0000" stop-color="#002c99"/><stop offset="0.2500" stop-color="#001399"/><stop offset="0.2515" stop-color="#0020ff"/><stop offset="0.3580" stop-color="#340fff"/><stop offset="0.4892" stop-color="#9900ff"/><stop offset="0.4907" stop-color="#5d0099"/><stop offset="0.5926" stop-color="#990099"/><stop offset="0.6651" stop-color="#990074"/><stop offset="0.7531" stop-color="#990057"/><stop offset="1.0000" stop-color="#99002e"/></linearGradient><linearGradient id="f64" gradientUnits="userSpaceOnUse" x1="1031" y1="0" x2="1679" y2="0"><stop offset="0.0000" stop-color="#002a99"/><stop offset="0.2515" stop-color="#001299"/><stop offset="0.2531" stop-color="#001dff"/><stop offset="0.3565" stop-color="#310eff"/><stop offset="0.4830" stop-color="#8f00ff"/><stop offset="0.4846" stop-color="#570099"/><stop offset="0.6003" stop-color="#990099"/><stop offset="0.6713" stop-color="#990075"/><stop offset="0.7577" stop-color="#990058"/><stop offset="1.0000" stop-color="#990030"/></linearGradient><linearGradient id="f65" gradientUnits="userSpaceOnUse" x1="1031" y1="0" x2="1679" y2="0"><stop offset="0.0000" stop-color="#002999"/><stop offset="0.2531" stop-color="#001199"/><stop offset="0.2546" stop-color="#001bff"/><stop offset="0.3534" stop-color="#2d0dff"/><stop offset="0.4753" stop-color="#8400ff"/><stop offset="0.4769" stop-color="#500099"/><stop offset="0.6080" stop-color="#990099"/><stop offset="0.7639" stop-color="#990059"/><stop offset="1.0000" stop-color="#990031"/></linearGradient><linearGradient id="f66" gradientUnits="userSpaceOnUse" x1="1031" y1="0" x2="1679" y2="0"><stop offset="0.0000" stop-color="#002799"/><stop offset="0.2546" stop-color="#000f99"/><stop offset="0.2562" stop-color="#001aff"/><stop offset="0.3503" stop-color="#290cff"/><stop offset="0.4676" stop-color="#7a00ff"/><stop offset="0.4691" stop-color="#4a0099"/><stop offset="0.6142" stop-color="#990099"/><stop offset="0.7685" stop-color="#99005b"/><stop offset="1.0000" stop-color="#990033"/></linearGradient><linearGradient id="f67" gradientUnits="userSpaceOnUse" x1="1031" y1="0" x2="1679" y2="0"><stop offset="0.0000" stop-color="#002699"/><stop offset="0.2562" stop-color="#000e99"/><stop offset="0.2577" stop-color="#0018ff"/><stop offset="0.3488" stop-color="#270bff"/><stop offset="0.4614" stop-color="#7100ff"/><stop offset="0.4630" stop-color="#450099"/><stop offset="0.6219" stop-color="#990099"/><stop offset="0.7747" stop-color="#99005b"/><stop offset="1.0000" stop-color="#990034"/></linearGradient><linearGradient id="f68" gradientUnits="userSpaceOnUse" x1="1031" y1="0" x2="1679" y2="0"><stop offset="0.0000" stop-color="#002499"/><stop offset="0.2577" stop-color="#000d99"/><stop offset="0.2593" stop-color="#0016ff"/><stop offset="0.3457" stop-color="#230bff"/><stop offset="0.4537" stop-color="#6800ff"/><stop offset="0.4552" stop-color="#3f0099"/><stop offset="0.6296" stop-color="#990099"/><stop offset="0.7793" stop-color="#99005d"/><stop offset="1.0000" stop-color="#990036"/></linearGradient><linearGradient id="f69" gradientUnits="userSpaceOnUse" x1="1031" y1="0" x2="1679" y2="0"><stop offset="0.0000" stop-color="#002399"/><stop offset="0.2593" stop-color="#000c99"/><stop offset="0.2608" stop-color="#0014ff"/><stop offset="0.3426" stop-color="#200aff"/><stop offset="0.4475" stop-color="#6100ff"/><stop offset="0.4491" stop-color="#3b0099"/><stop offset="0.6373" stop-color="#990098"/><stop offset="0.7855" stop-color="#99005e"/><stop offset="1.0000" stop-color="#990037"/></linearGradient><linearGradient id="f70" gradientUnits="userSpaceOnUse" x1="1031" y1="0" x2="1679" y2="0"><stop offset="0.0000" stop-color="#002299"/><stop offset="0.2608" stop-color="#000b99"/><stop offset="0.2623" stop-color="#0013ff"/><stop offset="0.3410" stop-color="#1e09ff"/><stop offset="0.4398" stop-color="#5800ff"/><stop offset="0.4414" stop-color="#360099"/><stop offset="0.6435" stop-color="#990099"/><stop offset="0.7901" stop-color="#99005f"/><stop offset="1.0000" stop-color="#990039"/></linearGradient><linearGradient id="f71" gradientUnits="userSpaceOnUse" x1="1031" y1="0" x2="1679" y2="0"><stop offset="0.0000" stop-color="#002099"/><stop offset="0.2608" stop-color="#000b99"/><stop offset="0.2623" stop-color="#0011ff"/><stop offset="0.3364" stop-color="#1b09ff"/><stop offset="0.4336" stop-color="#5200ff"/><stop offset="0.4352" stop-color="#320099"/><stop offset="0.6512" stop-color="#990099"/><stop offset="0.7948" stop-color="#990060"/><stop offset="1.0000" stop-color="#99003a"/></linearGradient><linearGradient id="f72" gradientUnits="userSpaceOnUse" x1="1031" y1="0" x2="1679" y2="0"><stop offset="0.0000" stop-color="#001f99"/><stop offset="0.2623" stop-color="#000a99"/><stop offset="0.2639" stop-color="#0010ff"/><stop offset="0.3349" stop-color="#1908ff"/><stop offset="0.4259" stop-color="#4a00ff"/><stop offset="0.4275" stop-color="#2d0099"/><stop offset="0.6590" stop-color="#990098"/><stop offset="0.8009" stop-color="#990061"/><stop offset="1.0000" stop-color="#99003c"/></linearGradient><linearGradient id="f73" gradientUnits="userSpaceOnUse" x1="1031" y1="0" x2="1679" y2="0"><stop offset="0.0000" stop-color="#001e99"/><stop offset="0.2639" stop-color="#000999"/><stop offset="0.2654" stop-color="#000fff"/><stop offset="0.3318" stop-color="#1607ff"/><stop offset="0.4198" stop-color="#4400ff"/><stop offset="0.4213" stop-color="#290099"/><stop offset="0.6651" stop-color="#990099"/><stop offset="0.8056" stop-color="#990062"/><stop offset="1.0000" stop-color="#99003d"/></linearGradient><linearGradient id="f74" gradientUnits="userSpaceOnUse" x1="1031" y1="0" x2="1679" y2="0"><stop offset="0.0000" stop-color="#001d99"/><stop offset="0.2654" stop-color="#000899"/><stop offset="0.2670" stop-color="#000dff"/><stop offset="0.4120" stop-color="#3e00ff"/><stop offset="0.4136" stop-color="#250099"/><stop offset="0.6728" stop-color="#990099"/><stop offset="0.8102" stop-color="#990064"/><stop offset="1.0000" stop-color="#99003f"/></linearGradient><linearGradient id="f75" gradientUnits="userSpaceOnUse" x1="1031" y1="0" x2="1679" y2="0"><stop offset="0.0000" stop-color="#001b99"/><stop offset="0.2670" stop-color="#000799"/><stop offset="0.2685" stop-color="#000cff"/><stop offset="0.4059" stop-color="#3800ff"/><stop offset="0.4074" stop-color="#220099"/><stop offset="0.6806" stop-color="#990099"/><stop offset="0.8148" stop-color="#990065"/><stop offset="1.0000" stop-color="#990041"/></linearGradient><linearGradient id="f76" gradientUnits="userSpaceOnUse" x1="1031" y1="0" x2="1679" y2="0"><stop offset="0.0000" stop-color="#001a99"/><stop offset="0.2685" stop-color="#000799"/><stop offset="0.2701" stop-color="#000bff"/><stop offset="0.3981" stop-color="#3200ff"/><stop offset="0.3997" stop-color="#1f0099"/><stop offset="0.5401" stop-color="#530099"/><stop offset="0.6867" stop-color="#990099"/><stop offset="0.8194" stop-color="#990066"/><stop offset="1.0000" stop-color="#990042"/></linearGradient><linearGradient id="f77" gradientUnits="userSpaceOnUse" x1="1031" y1="0" x2="1679" y2="0"><stop offset="0.0000" stop-color="#001999"/><stop offset="0.2701" stop-color="#000699"/><stop offset="0.2716" stop-color="#000aff"/><stop offset="0.3920" stop-color="#2d00ff"/><stop offset="0.3935" stop-color="#1c0099"/><stop offset="0.5401" stop-color="#510099"/><stop offset="0.6944" stop-color="#990099"/><stop offset="0.8241" stop-color="#990067"/><stop offset="1.0000" stop-color="#990044"/></linearGradient><linearGradient id="f78" gradientUnits="userSpaceOnUse" x1="1031" y1="0" x2="1679" y2="0"><stop offset="0.0000" stop-color="#001899"/><stop offset="0.2716" stop-color="#000599"/><stop offset="0.2731" stop-color="#0009ff"/><stop offset="0.3843" stop-color="#2800ff"/><stop offset="0.3858" stop-color="#190099"/><stop offset="0.5386" stop-color="#4e0099"/><stop offset="0.7022" stop-color="#990099"/><stop offset="0.8302" stop-color="#990068"/><stop offset="1.0000" stop-color="#990046"/></linearGradient><linearGradient id="f79" gradientUnits="userSpaceOnUse" x1="1031" y1="0" x2="1679" y2="0"><stop offset="0.0000" stop-color="#001799"/><stop offset="0.2731" stop-color="#000599"/><stop offset="0.2747" stop-color="#0008ff"/><stop offset="0.3781" stop-color="#2400ff"/><stop offset="0.3796" stop-color="#160099"/><stop offset="0.5401" stop-color="#4d0099"/><stop offset="0.7083" stop-color="#990099"/><stop offset="0.8349" stop-color="#990069"/><stop offset="1.0000" stop-color="#990047"/></linearGradient><linearGradient id="f80" gradientUnits="userSpaceOnUse" x1="1031" y1="0" x2="1679" y2="0"><stop offset="0.0000" stop-color="#001699"/><stop offset="0.2747" stop-color="#000499"/><stop offset="0.2762" stop-color="#0007ff"/><stop offset="0.3704" stop-color="#1f00ff"/><stop offset="0.3719" stop-color="#130099"/><stop offset="0.5386" stop-color="#4a0099"/><stop offset="0.7160" stop-color="#990099"/><stop offset="0.8380" stop-color="#99006b"/><stop offset="1.0000" stop-color="#990049"/></linearGradient><linearGradient id="f81" gradientUnits="userSpaceOnUse" x1="1031" y1="0" x2="1679" y2="0"><stop offset="0.0000" stop-color="#001699"/><stop offset="0.2762" stop-color="#000499"/><stop offset="0.2778" stop-color="#0006ff"/><stop offset="0.3642" stop-color="#1b00ff"/><stop offset="0.3657" stop-color="#110099"/><stop offset="0.5386" stop-color="#480099"/><stop offset="0.7238" stop-color="#990099"/><stop offset="0.8441" stop-color="#99006c"/><stop offset="1.0000" stop-color="#99004b"/></linearGradient><linearGradient id="f82" gradientUnits="userSpaceOnUse" x1="1031" y1="0" x2="1679" y2="0"><stop offset="0.0000" stop-color="#001599"/><stop offset="0.2778" stop-color="#000399"/><stop offset="0.2793" stop-color="#0005ff"/><stop offset="0.3565" stop-color="#1700ff"/><stop offset="0.3580" stop-color="#0e0099"/><stop offset="0.5370" stop-color="#460099"/><stop offset="0.7315" stop-color="#990099"/><stop offset="0.8488" stop-color="#99006d"/><stop offset="1.0000" stop-color="#99004c"/></linearGradient><linearGradient id="f83" gradientUnits="userSpaceOnUse" x1="1031" y1="0" x2="1679" y2="0"><stop offset="0.0000" stop-color="#001499"/><stop offset="0.2793" stop-color="#000399"/><stop offset="0.2809" stop-color="#0004ff"/><stop offset="0.3503" stop-color="#1400ff"/><stop offset="0.3519" stop-color="#0c0099"/><stop offset="0.5386" stop-color="#450099"/><stop offset="0.7377" stop-color="#990099"/><stop offset="0.8534" stop-color="#99006e"/><stop offset="1.0000" stop-color="#99004e"/></linearGradient><linearGradient id="f84" gradientUnits="userSpaceOnUse" x1="1031" y1="0" x2="1679" y2="0"><stop offset="0.0000" stop-color="#001399"/><stop offset="0.2809" stop-color="#000299"/><stop offset="0.2824" stop-color="#0004ff"/><stop offset="0.3426" stop-color="#1000ff"/><stop offset="0.3441" stop-color="#0a0099"/><stop offset="0.5370" stop-color="#420099"/><stop offset="0.7454" stop-color="#990099"/><stop offset="0.8580" stop-color="#99006f"/><stop offset="1.0000" stop-color="#990050"/></linearGradient><linearGradient id="f85" gradientUnits="userSpaceOnUse" x1="1031" y1="0" x2="1679" y2="0"><stop offset="0.0000" stop-color="#001299"/><stop offset="0.2824" stop-color="#000299"/><stop offset="0.2840" stop-color="#0003ff"/><stop offset="0.3349" stop-color="#0d00ff"/><stop offset="0.3364" stop-color="#080099"/><stop offset="0.5340" stop-color="#400099"/><stop offset="0.7531" stop-color="#990099"/><stop offset="0.8627" stop-color="#990071"/><stop offset="1.0000" stop-color="#990052"/></linearGradient><linearGradient id="f86" gradientUnits="userSpaceOnUse" x1="1031" y1="0" x2="1679" y2="0"><stop offset="0.0000" stop-color="#001199"/><stop offset="0.2840" stop-color="#000199"/><stop offset="0.2855" stop-color="#0002ff"/><stop offset="0.3287" stop-color="#0a00ff"/><stop offset="0.3302" stop-color="#070099"/><stop offset="0.5340" stop-color="#3e0099"/><stop offset="0.7593" stop-color="#990099"/><stop offset="0.8673" stop-color="#990072"/><stop offset="1.0000" stop-color="#990054"/></linearGradient><linearGradient id="f87" gradientUnits="userSpaceOnUse" x1="1031" y1="0" x2="1679" y2="0"><stop offset="0.0000" stop-color="#001199"/><stop offset="0.2855" stop-color="#000199"/><stop offset="0.2870" stop-color="#0002ff"/><stop offset="0.3210" stop-color="#0800ff"/><stop offset="0.3225" stop-color="#050099"/><stop offset="0.5324" stop-color="#3c0099"/><stop offset="0.7670" stop-color="#990099"/><stop offset="0.8704" stop-color="#990073"/><stop offset="1.0000" stop-color="#990055"/></linearGradient><linearGradient id="f88" gradientUnits="userSpaceOnUse" x1="1031" y1="0" x2="1679" y2="0"><stop offset="0.0000" stop-color="#001099"/><stop offset="0.2870" stop-color="#000199"/><stop offset="0.2886" stop-color="#0001ff"/><stop offset="0.3148" stop-color="#0500ff"/><stop offset="0.3164" stop-color="#030099"/><stop offset="0.5324" stop-color="#3b0099"/><stop offset="0.7747" stop-color="#990099"/><stop offset="0.8750" stop-color="#990074"/><stop offset="1.0000" stop-color="#990057"/></linearGradient><linearGradient id="f89" gradientUnits="userSpaceOnUse" x1="1031" y1="0" x2="1679" y2="0"><stop offset="0.0000" stop-color="#000f99"/><stop offset="0.2886" stop-color="#000099"/><stop offset="0.2901" stop-color="#0001ff"/><stop offset="0.3071" stop-color="#0300ff"/><stop offset="0.3086" stop-color="#020099"/><stop offset="0.5293" stop-color="#380099"/><stop offset="0.7809" stop-color="#990099"/><stop offset="1.0000" stop-color="#990059"/></linearGradient><linearGradient id="f90" gradientUnits="userSpaceOnUse" x1="1031" y1="0" x2="1679" y2="0"><stop offset="0.0000" stop-color="#000f99"/><stop offset="0.2901" stop-color="#000099"/><stop offset="0.2917" stop-color="#0000ff"/><stop offset="0.3009" stop-color="#0200ff"/><stop offset="0.3025" stop-color="#010099"/><stop offset="0.5293" stop-color="#370099"/><stop offset="0.7886" stop-color="#990099"/><stop offset="1.0000" stop-color="#99005b"/></linearGradient><linearGradient id="f91" gradientUnits="userSpaceOnUse" x1="1031" y1="0" x2="1679" y2="0"><stop offset="0.0000" stop-color="#000e99"/><stop offset="0.2901" stop-color="#000099"/><stop offset="0.2917" stop-color="#0000ff"/><stop offset="0.2932" stop-color="#0000ff"/><stop offset="0.2948" stop-color="#000099"/><stop offset="0.5247" stop-color="#340099"/><stop offset="0.7963" stop-color="#990099"/><stop offset="1.0000" stop-color="#99005d"/></linearGradient><linearGradient id="f92" gradientUnits="userSpaceOnUse" x1="1031" y1="0" x2="1679" y2="0"><stop offset="0.0000" stop-color="#000d99"/><stop offset="0.2932" stop-color="#000099"/><stop offset="0.3596" stop-color="#0a0099"/><stop offset="0.5725" stop-color="#420099"/><stop offset="0.8025" stop-color="#990099"/><stop offset="1.0000" stop-color="#99005f"/></linearGradient><linearGradient id="f93" gradientUnits="userSpaceOnUse" x1="1031" y1="0" x2="1679" y2="0"><stop offset="0.0000" stop-color="#000d99"/><stop offset="0.3302" stop-color="#040099"/><stop offset="0.5571" stop-color="#3b0099"/><stop offset="0.8102" stop-color="#990099"/><stop offset="1.0000" stop-color="#990061"/></linearGradient><linearGradient id="f94" gradientUnits="userSpaceOnUse" x1="1031" y1="0" x2="1679" y2="0"><stop offset="0.0000" stop-color="#000c99"/><stop offset="0.3333" stop-color="#040099"/><stop offset="0.5617" stop-color="#3c0099"/><stop offset="0.8179" stop-color="#990099"/><stop offset="1.0000" stop-color="#990063"/></linearGradient><linearGradient id="f95" gradientUnits="userSpaceOnUse" x1="1031" y1="0" x2="1679" y2="0"><stop offset="0.0000" stop-color="#000c99"/><stop offset="0.3364" stop-color="#050099"/><stop offset="0.5664" stop-color="#3c0099"/><stop offset="0.8256" stop-color="#990099"/><stop offset="1.0000" stop-color="#990065"/></linearGradient><linearGradient id="f96" gradientUnits="userSpaceOnUse" x1="1031" y1="0" x2="1679" y2="0"><stop offset="0.0000" stop-color="#000b99"/><stop offset="0.3395" stop-color="#050099"/><stop offset="0.5725" stop-color="#3c0099"/><stop offset="0.8318" stop-color="#990099"/><stop offset="1.0000" stop-color="#990067"/></linearGradient><linearGradient id="f97" gradientUnits="userSpaceOnUse" x1="1031" y1="0" x2="1679" y2="0"><stop offset="0.0000" stop-color="#000b99"/><stop offset="0.3426" stop-color="#050099"/><stop offset="0.5787" stop-color="#3d0099"/><stop offset="0.8395" stop-color="#990099"/><stop offset="1.0000" stop-color="#990069"/></linearGradient><linearGradient id="f98" gradientUnits="userSpaceOnUse" x1="1031" y1="0" x2="1679" y2="0"><stop offset="0.0000" stop-color="#000a99"/><stop offset="0.3457" stop-color="#050099"/><stop offset="0.5833" stop-color="#3d0099"/><stop offset="0.8457" stop-color="#990099"/><stop offset="1.0000" stop-color="#99006b"/></linearGradient><linearGradient id="f99" gradientUnits="userSpaceOnUse" x1="1031" y1="0" x2="1679" y2="0"><stop offset="0.0000" stop-color="#000a99"/><stop offset="0.3488" stop-color="#050099"/><stop offset="0.5880" stop-color="#3d0099"/><stop offset="0.8534" stop-color="#990099"/><stop offset="1.0000" stop-color="#99006d"/></linearGradient><linearGradient id="f100" gradientUnits="userSpaceOnUse" x1="1031" y1="0" x2="1679" y2="0"><stop offset="0.0000" stop-color="#000999"/><stop offset="0.3534" stop-color="#060099"/><stop offset="0.5941" stop-color="#3d0099"/><stop offset="0.8611" stop-color="#990099"/><stop offset="1.0000" stop-color="#99006f"/></linearGradient><linearGradient id="f101" gradientUnits="userSpaceOnUse" x1="1031" y1="0" x2="1679" y2="0"><stop offset="0.0000" stop-color="#000999"/><stop offset="0.3565" stop-color="#060099"/><stop offset="0.5988" stop-color="#3d0099"/><stop offset="0.8673" stop-color="#980099"/><stop offset="1.0000" stop-color="#990071"/></linearGradient><linearGradient id="f102" gradientUnits="userSpaceOnUse" x1="1031" y1="0" x2="1679" y2="0"><stop offset="0.0000" stop-color="#000899"/><stop offset="0.3596" stop-color="#060099"/><stop offset="0.6049" stop-color="#3e0099"/><stop offset="0.8750" stop-color="#990099"/><stop offset="1.0000" stop-color="#990073"/></linearGradient><linearGradient id="f103" gradientUnits="userSpaceOnUse" x1="1031" y1="0" x2="1679" y2="0"><stop offset="0.0000" stop-color="#000899"/><stop offset="0.3642" stop-color="#060099"/><stop offset="0.6111" stop-color="#3e0099"/><stop offset="0.8827" stop-color="#990099"/><stop offset="1.0000" stop-color="#990075"/></linearGradient><linearGradient id="f104" gradientUnits="userSpaceOnUse" x1="1031" y1="0" x2="1679" y2="0"><stop offset="0.0000" stop-color="#000799"/><stop offset="0.3673" stop-color="#070099"/><stop offset="0.6157" stop-color="#3e0099"/><stop offset="0.8904" stop-color="#990099"/><stop offset="1.0000" stop-color="#990077"/></linearGradient><linearGradient id="f105" gradientUnits="userSpaceOnUse" x1="1031" y1="0" x2="1679" y2="0"><stop offset="0.0000" stop-color="#000799"/><stop offset="0.3719" stop-color="#070099"/><stop offset="0.6219" stop-color="#3f0099"/><stop offset="0.8966" stop-color="#990099"/><stop offset="1.0000" stop-color="#990079"/></linearGradient><linearGradient id="f106" gradientUnits="userSpaceOnUse" x1="1031" y1="0" x2="1679" y2="0"><stop offset="0.0000" stop-color="#000699"/><stop offset="0.3750" stop-color="#070099"/><stop offset="0.6281" stop-color="#3f0099"/><stop offset="0.9043" stop-color="#990099"/><stop offset="1.0000" stop-color="#99007b"/></linearGradient><linearGradient id="f107" gradientUnits="userSpaceOnUse" x1="1031" y1="0" x2="1679" y2="0"><stop offset="0.0000" stop-color="#000699"/><stop offset="0.3796" stop-color="#080099"/><stop offset="0.6343" stop-color="#400099"/><stop offset="0.9120" stop-color="#990099"/><stop offset="1.0000" stop-color="#99007d"/></linearGradient><linearGradient id="f108" gradientUnits="userSpaceOnUse" x1="1031" y1="0" x2="1679" y2="0"><stop offset="0.0000" stop-color="#000699"/><stop offset="0.3827" stop-color="#080099"/><stop offset="0.6389" stop-color="#400099"/><stop offset="0.9182" stop-color="#990099"/><stop offset="1.0000" stop-color="#990080"/></linearGradient><linearGradient id="f109" gradientUnits="userSpaceOnUse" x1="1031" y1="0" x2="1679" y2="0"><stop offset="0.0000" stop-color="#000599"/><stop offset="0.3873" stop-color="#080099"/><stop offset="0.6451" stop-color="#400099"/><stop offset="0.9259" stop-color="#990099"/><stop offset="1.0000" stop-color="#990082"/></linearGradient><linearGradient id="f110" gradientUnits="userSpaceOnUse" x1="1031" y1="0" x2="1679" y2="0"><stop offset="0.0000" stop-color="#000599"/><stop offset="0.3920" stop-color="#080099"/><stop offset="0.6512" stop-color="#400099"/><stop offset="0.9336" stop-color="#990099"/><stop offset="1.0000" stop-color="#990084"/></linearGradient><linearGradient id="f111" gradientUnits="userSpaceOnUse" x1="1031" y1="0" x2="1679" y2="0"><stop offset="0.0000" stop-color="#000599"/><stop offset="0.3951" stop-color="#090099"/><stop offset="0.6559" stop-color="#400099"/><stop offset="0.9398" stop-color="#990099"/><stop offset="1.0000" stop-color="#990086"/></linearGradient><linearGradient id="f112" gradientUnits="userSpaceOnUse" x1="1031" y1="0" x2="1679" y2="0"><stop offset="0.0000" stop-color="#000499"/><stop offset="0.3225" stop-color="#000099"/><stop offset="0.3997" stop-color="#090099"/><stop offset="0.6620" stop-color="#410099"/><stop offset="0.9475" stop-color="#990099"/><stop offset="1.0000" stop-color="#990088"/></linearGradient><linearGradient id="f113" gradientUnits="userSpaceOnUse" x1="1031" y1="0" x2="1679" y2="0"><stop offset="0.0000" stop-color="#000499"/><stop offset="0.3241" stop-color="#000099"/><stop offset="0.4043" stop-color="#090099"/><stop offset="0.6682" stop-color="#410099"/><stop offset="0.9552" stop-color="#990099"/><stop offset="1.0000" stop-color="#99008b"/></linearGradient><linearGradient id="f114" gradientUnits="userSpaceOnUse" x1="1031" y1="0" x2="1679" y2="0"><stop offset="0.0000" stop-color="#000499"/><stop offset="0.3256" stop-color="#000099"/><stop offset="0.4090" stop-color="#0a0099"/><stop offset="0.6744" stop-color="#420099"/><stop offset="0.9630" stop-color="#990099"/><stop offset="1.0000" stop-color="#99008d"/></linearGradient><linearGradient id="f115" gradientUnits="userSpaceOnUse" x1="1031" y1="0" x2="1679" y2="0"><stop offset="0.0000" stop-color="#000399"/><stop offset="0.3272" stop-color="#000099"/><stop offset="0.4136" stop-color="#0a0099"/><stop offset="0.6404" stop-color="#380099"/><stop offset="0.9691" stop-color="#990099"/><stop offset="1.0000" stop-color="#99008f"/></linearGradient><linearGradient id="f116" gradientUnits="userSpaceOnUse" x1="1031" y1="0" x2="1679" y2="0"><stop offset="0.0000" stop-color="#000399"/><stop offset="0.3287" stop-color="#000099"/><stop offset="0.4182" stop-color="#0a0099"/><stop offset="0.6559" stop-color="#3b0099"/><stop offset="1.0000" stop-color="#990092"/></linearGradient><linearGradient id="f117" gradientUnits="userSpaceOnUse" x1="1031" y1="0" x2="1679" y2="0"><stop offset="0.0000" stop-color="#000399"/><stop offset="0.3302" stop-color="#000099"/><stop offset="0.4228" stop-color="#0b0099"/><stop offset="0.6713" stop-color="#3d0099"/><stop offset="1.0000" stop-color="#990094"/></linearGradient><linearGradient id="f118" gradientUnits="userSpaceOnUse" x1="1031" y1="0" x2="1679" y2="0"><stop offset="0.0000" stop-color="#000399"/><stop offset="0.3318" stop-color="#000099"/><stop offset="0.4275" stop-color="#0b0099"/><stop offset="0.6867" stop-color="#400099"/><stop offset="1.0000" stop-color="#990096"/></linearGradient><linearGradient id="f119" gradientUnits="userSpaceOnUse" x1="1031" y1="0" x2="1679" y2="0"><stop offset="0.0000" stop-color="#000299"/><stop offset="0.3333" stop-color="#000099"/><stop offset="0.4321" stop-color="#0c0099"/><stop offset="0.7037" stop-color="#430099"/><stop offset="1.0000" stop-color="#990099"/></linearGradient><linearGradient id="f120" gradientUnits="userSpaceOnUse" x1="1031" y1="0" x2="1679" y2="0"><stop offset="0.0000" stop-color="#000299"/><stop offset="0.3349" stop-color="#000099"/><stop offset="0.4336" stop-color="#0b0099"/><stop offset="0.7068" stop-color="#430099"/><stop offset="1.0000" stop-color="#970099"/></linearGradient><linearGradient id="f121" gradientUnits="userSpaceOnUse" x1="1031" y1="0" x2="1679" y2="0"><stop offset="0.0000" stop-color="#000299"/><stop offset="0.3364" stop-color="#000099"/><stop offset="0.4336" stop-color="#0b0099"/><stop offset="0.7052" stop-color="#410099"/><stop offset="1.0000" stop-color="#950099"/></linearGradient><linearGradient id="f122" gradientUnits="userSpaceOnUse" x1="1031" y1="0" x2="1679" y2="0"><stop offset="0.0000" stop-color="#000299"/><stop offset="0.3380" stop-color="#000099"/><stop offset="0.4336" stop-color="#0b0099"/><stop offset="0.7052" stop-color="#400099"/><stop offset="1.0000" stop-color="#920099"/></linearGradient><linearGradient id="f123" gradientUnits="userSpaceOnUse" x1="1031" y1="0" x2="1679" y2="0"><stop offset="0.0000" stop-color="#000199"/><stop offset="0.3395" stop-color="#000099"/><stop offset="0.4336" stop-color="#0a0099"/><stop offset="0.7052" stop-color="#3f0099"/><stop offset="1.0000" stop-color="#900099"/></linearGradient><linearGradient id="f124" gradientUnits="userSpaceOnUse" x1="1031" y1="0" x2="1679" y2="0"><stop offset="0.0000" stop-color="#000199"/><stop offset="0.3410" stop-color="#000099"/><stop offset="0.4352" stop-color="#0a0099"/><stop offset="0.7068" stop-color="#3e0099"/><stop offset="1.0000" stop-color="#8e0099"/></linearGradient></defs><g clip-path="url(#locus)"><rect x="1031" y="73" width="648" height="4" fill="url(#f0)"/><rect x="1031" y="77" width="648" height="4" fill="url(#f1)"/><rect x="1031" y="81" width="648" height="4" fill="url(#f2)"/><rect x="1031" y="85" width="648" height="4" fill="url(#f3)"/><rect x="1031" y="89" width="648" height="4" fill="url(#f4)"/><rect x="1031" y="93" width="648" height="4" fill="url(#f5)"/><rect x="1031" y="97" width="648" height="4" fill="url(#f6)"/><rect x="1031" y="101" width="648" height="4" fill="url(#f7)"/><rect x="1031" y="105" width="648" height="4" fill="url(#f8)"/><rect x="1031" y="109" width="648" height="4" fill="url(#f9)"/><rect x="1031" y="113" width="648" height="4" fill="url(#f10)"/><rect x="1031" y="117" width="648" height="4" fill="url(#f11)"/><rect x="1031" y="121" width="648" height="4" fill="url(#f12)"/><rect x="1031" y="125" width="648" height="4" fill="url(#f13)"/><rect x="1031" y="129" width="648" height="4" fill="url(#f14)"/><rect x="1031" y="133" width="648" height="4" fill="url(#f15)"/><rect x="1031" y="137" width="648" height="4" fill="url(#f16)"/><rect x="1031" y="141" width="648" height="4" fill="url(#f17)"/><rect x="1031" y="145" width="648" height="4" fill="url(#f18)"/><rect x="1031" y="149" width="648" height="4" fill="url(#f19)"/><rect x="1031" y="153" width="648" height="4" fill="url(#f20)"/><rect x="1031" y="157" width="648" height="4" fill="url(#f21)"/><rect x="1031" y="161" width="648" height="4" fill="url(#f22)"/><rect x="1031" y="165" width="648" height="4" fill="url(#f23)"/><rect x="1031" y="169" width="648" height="4" fill="url(#f24)"/><rect x="1031" y="173" width="648" height="4" fill="url(#f25)"/><rect x="1031" y="177" width="648" height="4" fill="url(#f26)"/><rect x="1031" y="181" width="648" height="4" fill="url(#f27)"/><rect x="1031" y="185" width="648" height="4" fill="url(#f28)"/><rect x="1031" y="189" width="648" height="4" fill="url(#f29)"/><rect x="1031" y="193" width="648" height="4" fill="url(#f30)"/><rect x="1031" y="197" width="648" height="4" fill="url(#f31)"/><rect x="1031" y="201" width="648" height="4" fill="url(#f32)"/><rect x="1031" y="205" width="648" height="4" fill="url(#f33)"/><rect x="1031" y="209" width="648" height="4" fill="url(#f34)"/><rect x="1031" y="213" width="648" height="4" fill="url(#f35)"/><rect x="1031" y="217" width="648" height="4" fill="url(#f36)"/><rect x="1031" y="221" width="648" height="4" fill="url(#f37)"/><rect x="1031" y="225" width="648" height="4" fill="url(#f38)"/><rect x="1031" y="229" width="648" height="4" fill="url(#f39)"/><rect x="1031" y="233" width="648" height="4" fill="url(#f40)"/><rect x="1031" y="237" width="648" height="4" fill="url(#f41)"/><rect x="1031" y="241" width="648" height="4" fill="url(#f42)"/><rect x="1031" y="245" width="648" height="4" fill="url(#f43)"/><rect x="1031" y="249" width="648" height="4" fill="url(#f44)"/><rect x="1031" y="253" width="648" height="4" fill="url(#f45)"/><rect x="1031" y="257" width="648" height="4" fill="url(#f46)"/><rect x="1031" y="261" width="648" height="4" fill="url(#f47)"/><rect x="1031" y="265" width="648" height="4" fill="url(#f48)"/><rect x="1031" y="269" width="648" height="4" fill="url(#f49)"/><rect x="1031" y="273" width="648" height="4" fill="url(#f50)"/><rect x="1031" y="277" width="648" height="4" fill="url(#f51)"/><rect x="1031" y="281" width="648" height="4" fill="url(#f52)"/><rect x="1031" y="285" width="648" height="4" fill="url(#f53)"/><rect x="1031" y="289" width="648" height="4" fill="url(#f54)"/><rect x="1031" y="293" width="648" height="4" fill="url(#f55)"/><rect x="1031" y="297" width="648" height="4" fill="url(#f56)"/><rect x="1031" y="301" width="648" height="4" fill="url(#f57)"/><rect x="1031" y="305" width="648" height="4" fill="url(#f58)"/><rect x="1031" y="309" width="648" height="4" fill="url(#f59)"/><rect x="1031" y="313" width="648" height="4" fill="url(#f60)"/><rect x="1031" y="317" width="648" height="4" fill="url(#f61)"/><rect x="1031" y="321" width="648" height="4" fill="url(#f62)"/><rect x="1031" y="325" width="648" height="4" fill="url(#f63)"/><rect x="1031" y="329" width="648" height="4" fill="url(#f64)"/><rect x="1031" y="333" width="648" height="4" fill="url(#f65)"/><rect x="1031" y="337" width="648" height="4" fill="url(#f66)"/><rect x="1031" y="341" width="648" height="4" fill="url(#f67)"/><rect x="1031" y="345" width="648" height="4" fill="url(#f68)"/><rect x="1031" y="349" width="648" height="4" fill="url(#f69)"/><rect x="1031" y="353" width="648" height="4" fill="url(#f70)"/><rect x="1031" y="357" width="648" height="4" fill="url(#f71)"/><rect x="1031" y="361" width="648" height="4" fill="url(#f72)"/><rect x="1031" y="365" width="648" height="4" fill="url(#f73)"/><rect x="1031" y="369" width="648" height="4" fill="url(#f74)"/><rect x="1031" y="373" width="648" height="4" fill="url(#f75)"/><rect x="1031" y="377" width="648" height="4" fill="url(#f76)"/><rect x="1031" y="381" width="648" height="4" fill="url(#f77)"/><rect x="1031" y="385" width="648" height="4" fill="url(#f78)"/><rect x="1031" y="389" width="648" height="4" fill="url(#f79)"/><rect x="1031" y="393" width="648" height="4" fill="url(#f80)"/><rect x="1031" y="397" width="648" height="4" fill="url(#f81)"/><rect x="1031" y="401" width="648" height="4" fill="url(#f82)"/><rect x="1031" y="405" width="648" height="4" fill="url(#f83)"/><rect x="1031" y="409" width="648" height="4" fill="url(#f84)"/><rect x="1031" y="413" width="648" height="4" fill="url(#f85)"/><rect x="1031" y="417" width="648" height="4" fill="url(#f86)"/><rect x="1031" y="421" width="648" height="4" fill="url(#f87)"/><rect x="1031" y="425" width="648" height="4" fill="url(#f88)"/><rect x="1031" y="429" width="648" height="4" fill="url(#f89)"/><rect x="1031" y="433" width="648" height="4" fill="url(#f90)"/><rect x="1031" y="437" width="648" height="4" fill="url(#f91)"/><rect x="1031" y="441" width="648" height="4" fill="url(#f92)"/><rect x="1031" y="445" width="648" height="4" fill="url(#f93)"/><rect x="1031" y="449" width="648" height="4" fill="url(#f94)"/><rect x="1031" y="453" width="648" height="4" fill="url(#f95)"/><rect x="1031" y="457" width="648" height="4" fill="url(#f96)"/><rect x="1031" y="461" width="648" height="4" fill="url(#f97)"/><rect x="1031" y="465" width="648" height="4" fill="url(#f98)"/><rect x="1031" y="469" width="648" height="4" fill="url(#f99)"/><rect x="1031" y="473" width="648" height="4" fill="url(#f100)"/><rect x="1031" y="477" width="648" height="4" fill="url(#f101)"/><rect x="1031" y="481" width="648" height="4" fill="url(#f102)"/><rect x="1031" y="485" width="648" height="4" fill="url(#f103)"/><rect x="1031" y="489" width="648" height="4" fill="url(#f104)"/><rect x="1031" y="493" width="648" height="4" fill="url(#f105)"/><rect x="1031" y="497" width="648" height="4" fill="url(#f106)"/><rect x="1031" y="501" width="648" height="4" fill="url(#f107)"/><rect x="1031" y="505" width="648" height="4" fill="url(#f108)"/><rect x="1031" y="509" width="648" height="4" fill="url(#f109)"/><rect x="1031" y="513" width="648" height="4" fill="url(#f110)"/><rect x="1031" y="517" width="648" height="4" fill="url(#f111)"/><rect x="1031" y="521" width="648" height="4" fill="url(#f112)"/><rect x="1031" y="525" width="648" height="4" fill="url(#f113)"/><rect x="1031" y="529" width="648" height="4" fill="url(#f114)"/><rect x="1031" y="533" width="648" height="4" fill="url(#f115)"/><rect x="1031" y="537" width="648" height="4" fill="url(#f116)"/><rect x="1031" y="541" width="648" height="4" fill="url(#f117)"/><rect x="1031" y="545" width="648" height="4" fill="url(#f118)"/><rect x="1031" y="549" width="648" height="4" fill="url(#f119)"/><rect x="1031" y="553" width="648" height="4" fill="url(#f120)"/><rect x="1031" y="557" width="648" height="4" fill="url(#f121)"/><rect x="1031" y="561" width="648" height="4" fill="url(#f122)"/><rect x="1031" y="565" width="648" height="4" fill="url(#f123)"/><rect x="1031" y="569" width="648" height="3" fill="url(#f124)"/></g><line x1="1024.7" y1="572.4" x2="1030.7" y2="572.4" stroke="#d0d0d0" stroke-width="1.4"/><text x="1025.2" y="577.4" font-size="14.5" fill="#d4d0cc" stroke="#d4d0cc" stroke-width="0.32" text-anchor="end">0</text><line x1="1024.7" y1="530.9" x2="1030.7" y2="530.9" stroke="#d0d0d0" stroke-width="1.4"/><text x="1025.2" y="535.9" font-size="14.5" fill="#d4d0cc" stroke="#d4d0cc" stroke-width="0.32" text-anchor="end">0,05</text><line x1="1024.7" y1="489.4" x2="1030.7" y2="489.4" stroke="#d0d0d0" stroke-width="1.4"/><text x="1025.2" y="494.4" font-size="14.5" fill="#d4d0cc" stroke="#d4d0cc" stroke-width="0.32" text-anchor="end">0,1</text><line x1="1024.7" y1="447.9" x2="1030.7" y2="447.9" stroke="#d0d0d0" stroke-width="1.4"/><text x="1025.2" y="452.9" font-size="14.5" fill="#d4d0cc" stroke="#d4d0cc" stroke-width="0.32" text-anchor="end">0,15</text><line x1="1024.7" y1="406.4" x2="1030.7" y2="406.4" stroke="#d0d0d0" stroke-width="1.4"/><text x="1025.2" y="411.4" font-size="14.5" fill="#d4d0cc" stroke="#d4d0cc" stroke-width="0.32" text-anchor="end">0,2</text><line x1="1024.7" y1="364.9" x2="1030.7" y2="364.9" stroke="#d0d0d0" stroke-width="1.4"/><text x="1025.2" y="369.9" font-size="14.5" fill="#d4d0cc" stroke="#d4d0cc" stroke-width="0.32" text-anchor="end">0,25</text><line x1="1024.7" y1="323.4" x2="1030.7" y2="323.4" stroke="#d0d0d0" stroke-width="1.4"/><text x="1025.2" y="328.4" font-size="14.5" fill="#d4d0cc" stroke="#d4d0cc" stroke-width="0.32" text-anchor="end">0,3</text><line x1="1024.7" y1="281.9" x2="1030.7" y2="281.9" stroke="#d0d0d0" stroke-width="1.4"/><text x="1025.2" y="286.9" font-size="14.5" fill="#d4d0cc" stroke="#d4d0cc" stroke-width="0.32" text-anchor="end">0,35</text><line x1="1024.7" y1="240.39999999999998" x2="1030.7" y2="240.39999999999998" stroke="#d0d0d0" stroke-width="1.4"/><text x="1025.2" y="245.39999999999998" font-size="14.5" fill="#d4d0cc" stroke="#d4d0cc" stroke-width="0.32" text-anchor="end">0,4</text><line x1="1024.7" y1="198.89999999999998" x2="1030.7" y2="198.89999999999998" stroke="#d0d0d0" stroke-width="1.4"/><text x="1025.2" y="203.89999999999998" font-size="14.5" fill="#d4d0cc" stroke="#d4d0cc" stroke-width="0.32" text-anchor="end">0,45</text><line x1="1024.7" y1="157.39999999999998" x2="1030.7" y2="157.39999999999998" stroke="#d0d0d0" stroke-width="1.4"/><text x="1025.2" y="162.39999999999998" font-size="14.5" fill="#d4d0cc" stroke="#d4d0cc" stroke-width="0.32" text-anchor="end">0,5</text><line x1="1024.7" y1="115.89999999999992" x2="1030.7" y2="115.89999999999992" stroke="#d0d0d0" stroke-width="1.4"/><text x="1025.2" y="120.89999999999992" font-size="14.5" fill="#d4d0cc" stroke="#d4d0cc" stroke-width="0.32" text-anchor="end">0,55</text><line x1="1030.7" y1="572.4" x2="1030.7" y2="578.4" stroke="#d0d0d0" stroke-width="1.4"/><text x="1030.7" y="594.2" font-size="14.5" fill="#d4d0cc" stroke="#d4d0cc" stroke-width="0.32" text-anchor="middle">0</text><line x1="1084.7" y1="572.4" x2="1084.7" y2="578.4" stroke="#d0d0d0" stroke-width="1.4"/><text x="1084.7" y="594.2" font-size="14.5" fill="#d4d0cc" stroke="#d4d0cc" stroke-width="0.32" text-anchor="middle">0,05</text><line x1="1138.7" y1="572.4" x2="1138.7" y2="578.4" stroke="#d0d0d0" stroke-width="1.4"/><text x="1138.7" y="594.2" font-size="14.5" fill="#d4d0cc" stroke="#d4d0cc" stroke-width="0.32" text-anchor="middle">0,1</text><line x1="1192.7" y1="572.4" x2="1192.7" y2="578.4" stroke="#d0d0d0" stroke-width="1.4"/><text x="1192.7" y="594.2" font-size="14.5" fill="#d4d0cc" stroke="#d4d0cc" stroke-width="0.32" text-anchor="middle">0,15</text><line x1="1246.7" y1="572.4" x2="1246.7" y2="578.4" stroke="#d0d0d0" stroke-width="1.4"/><text x="1246.7" y="594.2" font-size="14.5" fill="#d4d0cc" stroke="#d4d0cc" stroke-width="0.32" text-anchor="middle">0,2</text><line x1="1300.7" y1="572.4" x2="1300.7" y2="578.4" stroke="#d0d0d0" stroke-width="1.4"/><text x="1300.7" y="594.2" font-size="14.5" fill="#d4d0cc" stroke="#d4d0cc" stroke-width="0.32" text-anchor="middle">0,25</text><line x1="1354.7" y1="572.4" x2="1354.7" y2="578.4" stroke="#d0d0d0" stroke-width="1.4"/><text x="1354.7" y="594.2" font-size="14.5" fill="#d4d0cc" stroke="#d4d0cc" stroke-width="0.32" text-anchor="middle">0,3</text><line x1="1408.7" y1="572.4" x2="1408.7" y2="578.4" stroke="#d0d0d0" stroke-width="1.4"/><text x="1408.7" y="594.2" font-size="14.5" fill="#d4d0cc" stroke="#d4d0cc" stroke-width="0.32" text-anchor="middle">0,35</text><line x1="1462.7" y1="572.4" x2="1462.7" y2="578.4" stroke="#d0d0d0" stroke-width="1.4"/><text x="1462.7" y="594.2" font-size="14.5" fill="#d4d0cc" stroke="#d4d0cc" stroke-width="0.32" text-anchor="middle">0,4</text><line x1="1516.7" y1="572.4" x2="1516.7" y2="578.4" stroke="#d0d0d0" stroke-width="1.4"/><text x="1516.7" y="594.2" font-size="14.5" fill="#d4d0cc" stroke="#d4d0cc" stroke-width="0.32" text-anchor="middle">0,45</text><line x1="1570.7" y1="572.4" x2="1570.7" y2="578.4" stroke="#d0d0d0" stroke-width="1.4"/><text x="1570.7" y="594.2" font-size="14.5" fill="#d4d0cc" stroke="#d4d0cc" stroke-width="0.32" text-anchor="middle">0,5</text><line x1="1624.7" y1="572.4" x2="1624.7" y2="578.4" stroke="#d0d0d0" stroke-width="1.4"/><text x="1624.7" y="594.2" font-size="14.5" fill="#d4d0cc" stroke="#d4d0cc" stroke-width="0.32" text-anchor="middle">0,55</text>
</svg>
<canvas id="cv" width="1687" height="949"></canvas>
<svg width="1687" height="949" viewBox="0 0 1687 949">
<rect x="1130.9" y="84.2" width="13.2" height="13.2" fill="rgba(255,255,255,0.14)" stroke="rgba(255,255,255,0.88)" stroke-width="1.7"/><rect x="1144.4" y="95.2" width="13.2" height="13.2" fill="rgba(255,255,255,0.14)" stroke="rgba(255,255,255,0.88)" stroke-width="1.7"/><rect x="1159.9" y="108.8" width="13.2" height="13.2" fill="rgba(255,255,255,0.14)" stroke="rgba(255,255,255,0.88)" stroke-width="1.7"/><rect x="1179.8" y="126.8" width="13.2" height="13.2" fill="rgba(255,255,255,0.14)" stroke="rgba(255,255,255,0.88)" stroke-width="1.7"/><rect x="1204.7" y="147.8" width="13.2" height="13.2" fill="rgba(255,255,255,0.14)" stroke="rgba(255,255,255,0.88)" stroke-width="1.7"/><rect x="1244.9" y="94.9" width="13.2" height="13.2" fill="rgba(255,255,255,0.14)" stroke="rgba(255,255,255,0.88)" stroke-width="1.7"/><rect x="1243.7" y="107.8" width="13.2" height="13.2" fill="rgba(255,255,255,0.14)" stroke="rgba(255,255,255,0.88)" stroke-width="1.7"/><rect x="1242.4" y="122.1" width="13.2" height="13.2" fill="rgba(255,255,255,0.14)" stroke="rgba(255,255,255,0.88)" stroke-width="1.7"/><rect x="1240.9" y="137.5" width="13.2" height="13.2" fill="rgba(255,255,255,0.14)" stroke="rgba(255,255,255,0.88)" stroke-width="1.7"/><rect x="1239.9" y="154.7" width="13.2" height="13.2" fill="rgba(255,255,255,0.14)" stroke="rgba(255,255,255,0.88)" stroke-width="1.7"/><rect x="1220.3" y="178.1" width="13.2" height="13.2" fill="rgba(255,255,255,0.14)" stroke="rgba(255,255,255,0.88)" stroke-width="1.7"/><rect x="1203.8" y="180.7" width="13.2" height="13.2" fill="rgba(255,255,255,0.14)" stroke="rgba(255,255,255,0.88)" stroke-width="1.7"/><rect x="1186.8" y="182.2" width="13.2" height="13.2" fill="rgba(255,255,255,0.14)" stroke="rgba(255,255,255,0.88)" stroke-width="1.7"/><rect x="1171.0" y="184.7" width="13.2" height="13.2" fill="rgba(255,255,255,0.14)" stroke="rgba(255,255,255,0.88)" stroke-width="1.7"/><rect x="1153.9" y="187.2" width="13.2" height="13.2" fill="rgba(255,255,255,0.14)" stroke="rgba(255,255,255,0.88)" stroke-width="1.7"/><rect x="1234.0" y="205.8" width="13.2" height="13.2" fill="rgba(255,255,255,0.14)" stroke="rgba(255,255,255,0.88)" stroke-width="1.7"/><rect x="1231.5" y="244.9" width="13.2" height="13.2" fill="rgba(255,255,255,0.14)" stroke="rgba(255,255,255,0.88)" stroke-width="1.7"/><rect x="1227.0" y="291.7" width="13.2" height="13.2" fill="rgba(255,255,255,0.14)" stroke="rgba(255,255,255,0.88)" stroke-width="1.7"/><rect x="1220.4" y="353.8" width="13.2" height="13.2" fill="rgba(255,255,255,0.14)" stroke="rgba(255,255,255,0.88)" stroke-width="1.7"/><rect x="1213.4" y="433.7" width="13.2" height="13.2" fill="rgba(255,255,255,0.14)" stroke="rgba(255,255,255,0.88)" stroke-width="1.7"/><rect x="1255.8" y="190.8" width="13.2" height="13.2" fill="rgba(255,255,255,0.14)" stroke="rgba(255,255,255,0.88)" stroke-width="1.7"/><rect x="1278.4" y="209.8" width="13.2" height="13.2" fill="rgba(255,255,255,0.14)" stroke="rgba(255,255,255,0.88)" stroke-width="1.7"/><rect x="1305.8" y="233.6" width="13.2" height="13.2" fill="rgba(255,255,255,0.14)" stroke="rgba(255,255,255,0.88)" stroke-width="1.7"/><rect x="1336.2" y="259.7" width="13.2" height="13.2" fill="rgba(255,255,255,0.14)" stroke="rgba(255,255,255,0.88)" stroke-width="1.7"/><rect x="1374.8" y="291.8" width="13.2" height="13.2" fill="rgba(255,255,255,0.14)" stroke="rgba(255,255,255,0.88)" stroke-width="1.7"/><rect x="1293.9" y="166.9" width="13.2" height="13.2" fill="rgba(255,255,255,0.14)" stroke="rgba(255,255,255,0.88)" stroke-width="1.7"/><rect x="1352.7" y="158.9" width="13.2" height="13.2" fill="rgba(255,255,255,0.14)" stroke="rgba(255,255,255,0.88)" stroke-width="1.7"/><rect x="1421.7" y="147.9" width="13.2" height="13.2" fill="rgba(255,255,255,0.14)" stroke="rgba(255,255,255,0.88)" stroke-width="1.7"/><rect x="1487.7" y="137.7" width="13.2" height="13.2" fill="rgba(255,255,255,0.14)" stroke="rgba(255,255,255,0.88)" stroke-width="1.7"/><rect x="1559.8" y="126.7" width="13.2" height="13.2" fill="rgba(255,255,255,0.14)" stroke="rgba(255,255,255,0.88)" stroke-width="1.7"/><ellipse cx="1140.9" cy="90.8" rx="4.3" ry="4.4" fill="rgb(30, 185, 30)" stroke="#000" stroke-width="1.25"/><ellipse cx="1153.9" cy="101.8" rx="4.3" ry="4.4" fill="rgb(80, 175, 80)" stroke="#000" stroke-width="1.25"/><ellipse cx="1169.0" cy="116.0" rx="4.3" ry="4.4" fill="rgb(110, 170, 110)" stroke="#000" stroke-width="1.25"/><ellipse cx="1187.9" cy="132.2" rx="4.3" ry="4.4" fill="rgb(130, 175, 130)" stroke="#000" stroke-width="1.25"/><ellipse cx="1213.0" cy="155.9" rx="4.3" ry="4.4" fill="rgb(160, 185, 160)" stroke="#000" stroke-width="1.25"/><ellipse cx="1250.3" cy="101.9" rx="4.3" ry="4.4" fill="rgb(200, 190, 30)" stroke="#000" stroke-width="1.25"/><ellipse cx="1249.0" cy="114.4" rx="4.3" ry="4.4" fill="rgb(190, 185, 90)" stroke="#000" stroke-width="1.25"/><ellipse cx="1247.4" cy="127.8" rx="4.3" ry="4.4" fill="rgb(190, 185, 120)" stroke="#000" stroke-width="1.25"/><ellipse cx="1245.9" cy="144.9" rx="4.3" ry="4.4" fill="rgb(190, 185, 140)" stroke="#000" stroke-width="1.25"/><ellipse cx="1245.0" cy="161.3" rx="4.3" ry="4.4" fill="rgb(185, 180, 150)" stroke="#000" stroke-width="1.25"/><ellipse cx="1226.9" cy="184.7" rx="4.3" ry="4.4" fill="rgb(170, 185, 185)" stroke="#000" stroke-width="1.25"/><ellipse cx="1210.2" cy="186.0" rx="4.3" ry="4.4" fill="rgb(150, 185, 185)" stroke="#000" stroke-width="1.25"/><ellipse cx="1195.0" cy="188.8" rx="4.3" ry="4.4" fill="rgb(120, 180, 180)" stroke="#000" stroke-width="1.25"/><ellipse cx="1179.8" cy="191.9" rx="4.3" ry="4.4" fill="rgb(90, 180, 185)" stroke="#000" stroke-width="1.25"/><ellipse cx="1163.4" cy="193.0" rx="4.3" ry="4.4" fill="rgb(40, 175, 190)" stroke="#000" stroke-width="1.25"/><ellipse cx="1240.9" cy="212.4" rx="4.3" ry="4.4" fill="rgb(150, 150, 185)" stroke="#000" stroke-width="1.25"/><ellipse cx="1238.0" cy="252.3" rx="4.3" ry="4.4" fill="rgb(130, 130, 190)" stroke="#000" stroke-width="1.25"/><ellipse cx="1233.9" cy="297.7" rx="4.3" ry="4.4" fill="rgb(100, 100, 190)" stroke="#000" stroke-width="1.25"/><ellipse cx="1227.7" cy="362.5" rx="4.3" ry="4.4" fill="rgb(80, 80, 200)" stroke="#000" stroke-width="1.25"/><ellipse cx="1221.1" cy="444.1" rx="4.3" ry="4.4" fill="rgb(20,20,175)" stroke="#000050" stroke-width="1.25"/><ellipse cx="1263.0" cy="198.9" rx="4.3" ry="4.4" fill="rgb(190, 165, 190)" stroke="#000" stroke-width="1.25"/><ellipse cx="1283.5" cy="217.9" rx="4.3" ry="4.4" fill="rgb(200, 140, 200)" stroke="#000" stroke-width="1.25"/><ellipse cx="1310.9" cy="241.2" rx="4.3" ry="4.4" fill="rgb(200, 120, 200)" stroke="#000" stroke-width="1.25"/><ellipse cx="1342.8" cy="270.3" rx="4.3" ry="4.4" fill="rgb(200, 100, 200)" stroke="#000" stroke-width="1.25"/><ellipse cx="1381.4" cy="303.6" rx="4.3" ry="4.4" fill="rgb(160, 20, 160)" stroke="#000" stroke-width="1.25"/><ellipse cx="1299.0" cy="174.1" rx="4.3" ry="4.4" fill="rgb(190, 150, 150)" stroke="#000" stroke-width="1.25"/><ellipse cx="1357.8" cy="165.5" rx="4.3" ry="4.4" fill="rgb(195, 120, 120)" stroke="#000" stroke-width="1.25"/><ellipse cx="1427.0" cy="156.0" rx="4.3" ry="4.4" fill="rgb(200, 95, 95)" stroke="#000" stroke-width="1.25"/><ellipse cx="1494.9" cy="145.6" rx="4.3" ry="4.4" fill="rgb(200, 70, 70)" stroke="#000" stroke-width="1.25"/><ellipse cx="1569.3" cy="136.1" rx="4.3" ry="4.4" fill="rgb(215, 10, 10)" stroke="#000" stroke-width="1.25"/><rect x="1236.9" y="175.5" width="13.4" height="13.4" fill="rgba(255,255,255,0.4)" stroke="#000" stroke-width="1.7"/><ellipse cx="1243.5" cy="181.9" rx="4.2" ry="4.6" fill="#fff" stroke="#000" stroke-width="1.3"/><circle cx="1219.9" cy="248.3" r="5" fill="#000"/><defs><linearGradient id="insY" x1="0" y1="0" x2="1" y2="1"><stop offset="0" stop-color="#a0ff00"/><stop offset="0.45" stop-color="#ffff00"/><stop offset="1" stop-color="#ffb400"/></linearGradient><linearGradient id="insO" x1="0" y1="0" x2="1" y2="1"><stop offset="0" stop-color="#609600"/><stop offset="0.45" stop-color="#9a9a00"/><stop offset="1" stop-color="#9a6c00"/></linearGradient></defs><rect x="1455.7" y="416" width="219.5" height="149.5" fill="#262626"/><path d="M1459 419 L1567.3 419 L1672.5 489 L1672.5 554.4 L1459 426.8 Z" fill="url(#insO)"/><path d="M1459 426.8 L1672.5 554.4 L1672.5 563.5 L1459 563.5 Z" fill="url(#insY)"/><rect x="1458.4" y="418.3" width="214.4" height="145.3" fill="none" stroke="#8a8a8a" stroke-width="1.6"/><rect x="1557.8" y="483" width="14.5" height="14.5" fill="none" stroke="rgba(255,255,255,0.9)" stroke-width="2"/><ellipse cx="1561.7" cy="482.5" rx="4.8" ry="4.3" fill="#c0c000" stroke="#000" stroke-width="1.5"/><rect x="1030.7" y="72.5" width="648.5999999999999" height="499.9" fill="none" stroke="#9a9a9a" stroke-width="1.5"/>
</svg>
<script>
(function(){
var c=document.getElementById('cv'); if(!c||!c.getContext) return; var ctx=c.getContext('2d');
var OX=1031.0,OY=571.8,SX=1079.0,SY=832.5;
var X0=1031,Y0=73,X1=1679,Y1=572;
var w=X1-X0,h=Y1-Y0;
var off=document.createElement('canvas'); off.width=w; off.height=h;
var oc=off.getContext('2d'); var img=oc.createImageData(w,h); var d=img.data;
var GE=1.3, KO=0.6;
for(var j=0;j<h;j++){ var v=(OY-(Y0+j+0.5))/SY; if(v<0.001) v=0.001;
 for(var i=0;i<w;i++){ var u=(X0+i+0.5-OX)/SX;
   var den=6*u-16*v+12; var x=9*u/den, y=4*v/den;
   var Xc=x/y, Zc=(1-x-y)/y;
   var r= 2.4934969*Xc -0.9313836 -0.4027108*Zc;
   var g=-0.8294890*Xc +1.7626641 +0.0236247*Zc;
   var b= 0.0358458*Xc -0.0761724 +0.9568845*Zc;
   var inside = (r>=0&&g>=0&&b>=0);
   if(r<0)r=0; if(g<0)g=0; if(b<0)b=0;
   var m=Math.max(r,g,b); if(m<=0) m=1;
   r=Math.pow(r/m,GE); g=Math.pow(g/m,GE); b=Math.pow(b/m,GE);
   var k= inside?1:KO;
   var p=(j*w+i)*4; d[p]=r*255*k; d[p+1]=g*255*k; d[p+2]=b*255*k; d[p+3]=255;
 }}
oc.putImageData(img,0,0);
ctx.save(); ctx.beginPath(); ctx.rect(X0,Y0,w,h); ctx.clip();
ctx.beginPath(); ctx.moveTo(1308.1,558.0); ctx.bezierCurveTo(1308.06,557.99,1307.98,557.94,1307.91,557.99);ctx.bezierCurveTo(1307.84,558.03,1307.77,558.21,1307.67,558.26);ctx.bezierCurveTo(1307.58,558.30,1307.44,558.21,1307.32,558.26);ctx.bezierCurveTo(1307.19,558.31,1307.06,558.49,1306.90,558.53);ctx.bezierCurveTo(1306.74,558.58,1306.57,558.54,1306.36,558.54);ctx.bezierCurveTo(1306.15,558.54,1305.91,558.54,1305.64,558.54);ctx.bezierCurveTo(1305.37,558.54,1305.17,558.68,1304.75,558.55);ctx.bezierCurveTo(1304.33,558.41,1303.87,558.19,1303.13,557.74);ctx.bezierCurveTo(1302.40,557.30,1301.43,556.67,1300.33,555.88);ctx.bezierCurveTo(1299.24,555.08,1298.10,554.19,1296.56,552.97);ctx.bezierCurveTo(1295.03,551.74,1293.16,550.25,1291.11,548.53);ctx.bezierCurveTo(1289.05,546.81,1286.83,544.84,1284.23,542.65);ctx.bezierCurveTo(1281.63,540.47,1278.88,538.20,1275.53,535.44);ctx.bezierCurveTo(1272.18,532.67,1268.32,529.54,1264.13,526.06);ctx.bezierCurveTo(1259.94,522.57,1255.50,519.01,1250.40,514.54);ctx.bezierCurveTo(1245.31,510.08,1239.73,505.27,1233.55,499.28);ctx.bezierCurveTo(1227.37,493.29,1221.16,487.47,1213.31,478.61);ctx.bezierCurveTo(1205.46,469.74,1196.22,458.93,1186.46,446.11);ctx.bezierCurveTo(1176.70,433.28,1165.77,418.29,1154.75,401.66);ctx.bezierCurveTo(1143.74,385.03,1131.61,365.53,1120.36,346.34);ctx.bezierCurveTo(1109.11,327.14,1097.08,306.06,1087.25,286.51);ctx.bezierCurveTo(1077.42,266.97,1068.62,246.72,1061.38,229.08);ctx.bezierCurveTo(1054.15,211.43,1048.27,194.72,1043.83,180.66);ctx.bezierCurveTo(1039.39,166.59,1036.63,154.85,1034.75,144.67);ctx.bezierCurveTo(1032.87,134.50,1032.34,126.66,1032.55,119.62);ctx.bezierCurveTo(1032.76,112.57,1034.06,107.09,1036.01,102.40);ctx.bezierCurveTo(1037.96,97.71,1040.93,94.22,1044.26,91.47);ctx.bezierCurveTo(1047.58,88.72,1051.68,87.17,1055.94,85.90);ctx.bezierCurveTo(1060.21,84.62,1065.01,84.26,1069.85,83.84);ctx.bezierCurveTo(1074.70,83.41,1079.92,83.38,1085.01,83.33);ctx.bezierCurveTo(1090.11,83.27,1095.17,83.36,1100.42,83.52);ctx.bezierCurveTo(1105.66,83.68,1110.92,83.94,1116.48,84.27);ctx.bezierCurveTo(1122.05,84.61,1127.77,85.03,1133.80,85.53);ctx.bezierCurveTo(1139.82,86.02,1146.02,86.59,1152.60,87.23);ctx.bezierCurveTo(1159.18,87.86,1166.01,88.56,1173.28,89.32);ctx.bezierCurveTo(1180.54,90.08,1188.15,90.90,1196.20,91.79);ctx.bezierCurveTo(1204.24,92.67,1212.64,93.62,1221.54,94.63);ctx.bezierCurveTo(1230.44,95.63,1239.78,96.68,1249.60,97.80);ctx.bezierCurveTo(1259.42,98.92,1269.69,100.11,1280.43,101.35);ctx.bezierCurveTo(1291.18,102.59,1302.42,103.89,1314.07,105.23);ctx.bezierCurveTo(1325.72,106.58,1337.90,107.99,1350.34,109.42);ctx.bezierCurveTo(1362.78,110.85,1375.75,112.33,1388.72,113.83);ctx.bezierCurveTo(1401.68,115.33,1415.20,116.90,1428.14,118.40);ctx.bezierCurveTo(1441.07,119.89,1453.78,121.36,1466.35,122.80);ctx.bezierCurveTo(1478.92,124.25,1491.73,125.73,1503.54,127.09);ctx.bezierCurveTo(1515.36,128.45,1526.66,129.72,1537.24,130.94);ctx.bezierCurveTo(1547.81,132.16,1557.83,133.32,1567.01,134.39);ctx.bezierCurveTo(1576.20,135.45,1584.60,136.43,1592.36,137.32);ctx.bezierCurveTo(1600.12,138.22,1607.06,139.00,1613.57,139.75);ctx.bezierCurveTo(1620.09,140.50,1625.90,141.18,1631.47,141.82);ctx.bezierCurveTo(1637.03,142.47,1642.21,143.07,1646.98,143.62);ctx.bezierCurveTo(1651.75,144.17,1656.14,144.68,1660.10,145.14);ctx.bezierCurveTo(1664.05,145.59,1667.56,145.98,1670.70,146.33);ctx.bezierCurveTo(1673.84,146.69,1676.50,147.00,1678.94,147.29);ctx.bezierCurveTo(1681.38,147.57,1683.48,147.81,1685.35,148.03);ctx.bezierCurveTo(1687.21,148.24,1688.39,148.38,1690.14,148.58);ctx.bezierCurveTo(1691.89,148.79,1694.22,149.06,1695.84,149.24);ctx.bezierCurveTo(1697.46,149.43,1698.57,149.56,1699.87,149.71);ctx.bezierCurveTo(1701.17,149.86,1703.01,150.07,1703.64,150.15); ctx.closePath(); ctx.clip();
ctx.drawImage(off,X0,Y0); ctx.restore();
})();
</script>
</body></html>
